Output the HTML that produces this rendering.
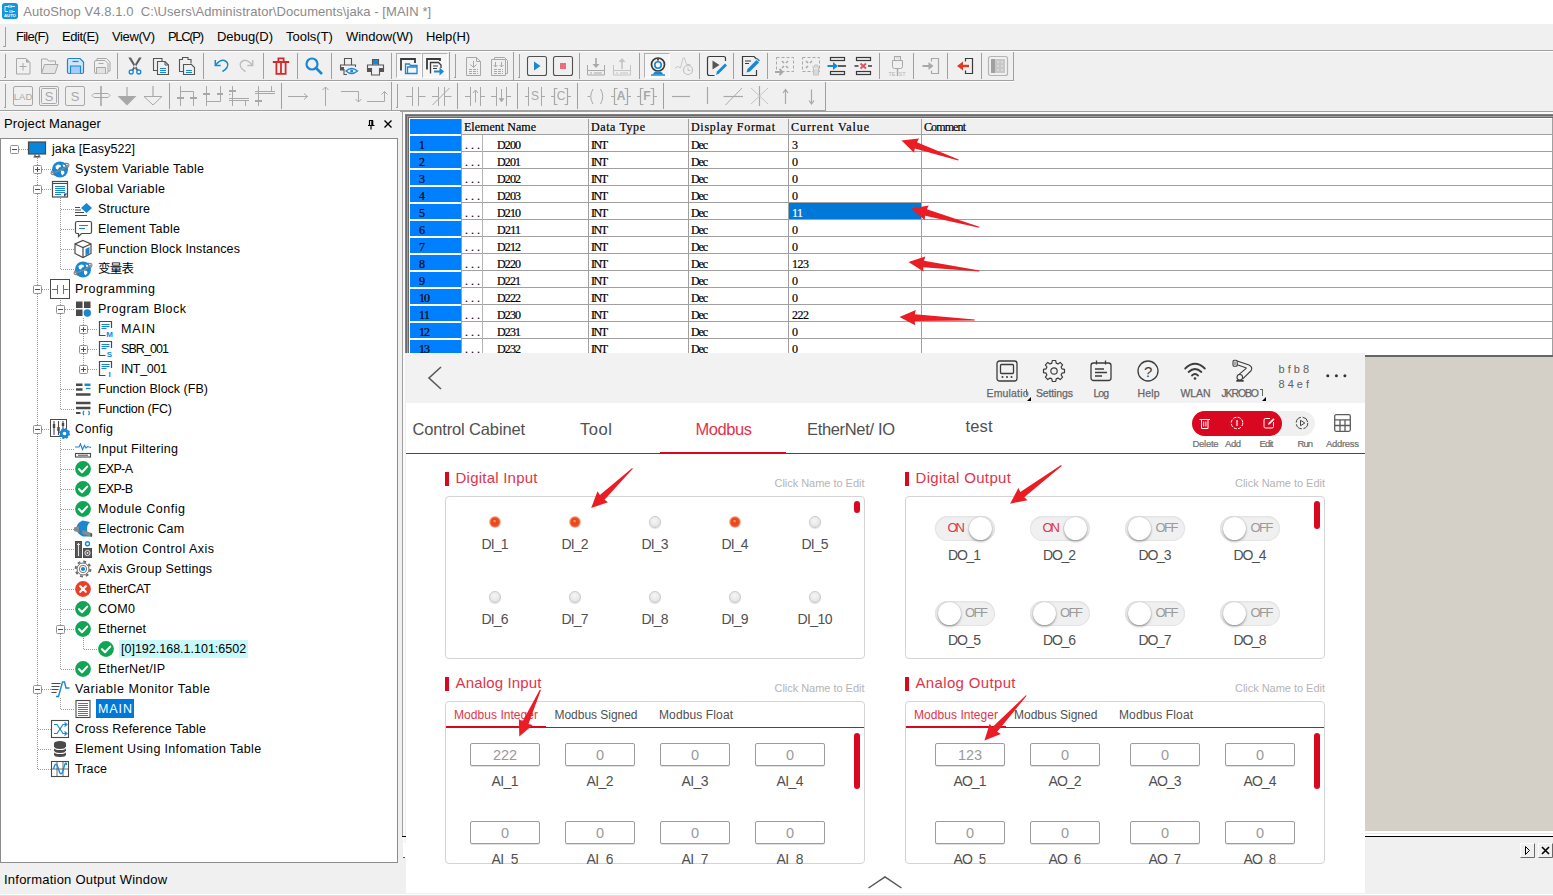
<!DOCTYPE html>
<html lang="en"><head><meta charset="utf-8"><title>AutoShop</title><style>
html,body{margin:0;padding:0;}
body{width:1553px;height:896px;overflow:hidden;background:#f0f0f0;position:relative;font-family:"Liberation Sans","Noto Sans CJK SC",sans-serif;}
div,span.t,svg{position:absolute;box-sizing:border-box;}
span.t{white-space:pre;}
svg{overflow:visible;}
</style></head><body>
<!-- chrome -->
<div style="left:0px;top:0px;width:1553px;height:24px;background:#fff;"></div>
<svg style="left:2px;top:3px" width="16" height="16" viewBox="0 0 16 16"><rect width="16" height="16" rx="2.800" fill="#1397dd"/><path d="M3 3.5h4M9 3.5h4M7 2v3M9 2v3M3 3.5v5h3M8 7v3M10 7v3M10 8.5h3" stroke="#d8f0ff" stroke-width="1" fill="none"/><text x="8" y="14.3" font-size="4.200" font-weight="700" fill="#fff" text-anchor="middle" font-family="Liberation Sans, sans-serif">AUTO</text></svg>
<span class="t" style="left:23.3px;top:2.5px;font:400 13px/18px 'Liberation Sans','Noto Sans CJK SC',sans-serif;color:#8a8a8a;letter-spacing:0.06px;">AutoShop V4.8.1.0  C:\Users\Administrator\Documents\jaka - [MAIN *]</span>
<div style="left:0px;top:24px;width:1553px;height:27px;background:#f0f0f0;"></div>
<div style="left:5px;top:27px;width:1px;height:20px;background:#a0a0a0;"></div>
<div style="left:3px;top:46px;width:2px;height:1px;background:#a0a0a0;"></div>
<span class="t" style="left:16.0px;top:27.5px;font:400 13px/18px 'Liberation Sans','Noto Sans CJK SC',sans-serif;color:#000;letter-spacing:-0.76px;">File(F)</span>
<span class="t" style="left:62.0px;top:27.5px;font:400 13px/18px 'Liberation Sans','Noto Sans CJK SC',sans-serif;color:#000;letter-spacing:-0.46px;">Edit(E)</span>
<span class="t" style="left:112.0px;top:27.5px;font:400 13px/18px 'Liberation Sans','Noto Sans CJK SC',sans-serif;color:#000;letter-spacing:-0.38px;">View(V)</span>
<span class="t" style="left:168.0px;top:27.5px;font:400 13px/18px 'Liberation Sans','Noto Sans CJK SC',sans-serif;color:#000;letter-spacing:-1.32px;">PLC(P)</span>
<span class="t" style="left:217.0px;top:27.5px;font:400 13px/18px 'Liberation Sans','Noto Sans CJK SC',sans-serif;color:#000;letter-spacing:-0.05px;">Debug(D)</span>
<span class="t" style="left:286.0px;top:27.5px;font:400 13px/18px 'Liberation Sans','Noto Sans CJK SC',sans-serif;color:#000;">Tools(T)</span>
<span class="t" style="left:346.0px;top:27.5px;font:400 13px/18px 'Liberation Sans','Noto Sans CJK SC',sans-serif;color:#000;letter-spacing:-0.02px;">Window(W)</span>
<span class="t" style="left:426.0px;top:27.5px;font:400 13px/18px 'Liberation Sans','Noto Sans CJK SC',sans-serif;color:#000;letter-spacing:-0.13px;">Help(H)</span>
<div style="left:0px;top:50px;width:1553px;height:1px;background:#a0a0a0;"></div>
<div style="left:0px;top:51px;width:1553px;height:1px;background:#fff;"></div>
<div style="left:0px;top:80px;width:1014px;height:1px;background:#a0a0a0;"></div>
<div style="left:0px;top:81px;width:1014px;height:1px;background:#fff;"></div>
<div style="left:0px;top:110px;width:826px;height:1px;background:#a0a0a0;"></div>
<div style="left:0px;top:111px;width:400px;height:1px;background:#fbfbfb;"></div>
<span class="t" style="left:4.0px;top:114.5px;font:400 13px/18px 'Liberation Sans','Noto Sans CJK SC',sans-serif;color:#000;letter-spacing:0.11px;">Project Manager</span>
<svg style="left:366px;top:119px" width="10" height="11" viewBox="0 0 10 11"><path d="M3 1.500h4M3.500 1.500v5M6 1.500v5M2 6.500h6.500M5 6.500v4" stroke="#000" stroke-width="1.200" fill="none"/><path d="M6.500 1.500v5" stroke="#000" stroke-width="1.600"/></svg>
<svg style="left:383px;top:119px" width="10" height="10" viewBox="0 0 10 10"><path d="M1.5 1.5l7 7M8.5 1.5l-7 7" stroke="#000" stroke-width="1.4" fill="none"/></svg>
<div style="left:0px;top:138px;width:398px;height:725px;background:#fff;border:1px solid #8c8c8c;"></div>
<span class="t" style="left:4.0px;top:870.5px;font:400 13px/18px 'Liberation Sans','Noto Sans CJK SC',sans-serif;color:#000;letter-spacing:0.23px;">Information Output Window</span>
<div style="left:0px;top:894px;width:1553px;height:1px;background:#fdfdfd;"></div>
<div style="left:0px;top:895px;width:1553px;height:1px;background:#dedede;"></div>
<div style="left:1365px;top:357px;width:188px;height:474px;background:#d4d0c8;"></div>
<div style="left:1365px;top:831px;width:188px;height:5px;background:#fff;"></div>
<div style="left:1365px;top:833px;width:188px;height:1px;background:#e6e6e6;"></div>
<div style="left:1365px;top:836px;width:188px;height:1px;background:#000;"></div>
<svg style="left:1520px;top:843px" width="34" height="15" viewBox="0 0 34 15"><rect x="0.500" y="0.500" width="14" height="14" fill="#f0f0f0" stroke="#fff"/><path d="M14.500 0.500v14h-14" stroke="#696969" fill="none"/><path d="M5.500 3.500v8l4-4z" fill="none" stroke="#000" stroke-width="1"/><rect x="18.500" y="0.500" width="14" height="14" fill="#f0f0f0" stroke="#fff"/><path d="M32.500 0.500v14h-14" stroke="#696969" fill="none"/><path d="M22 4l7 7M29 4l-7 7" stroke="#000" stroke-width="1.600"/></svg>
<!-- toolbar -->
<div style="left:396px;top:53px;width:26px;height:25px;background:#f6f6f6;border:1px solid #fff;border-top-color:#b0b0b0;border-left-color:#b0b0b0;"></div>
<div style="left:422px;top:53px;width:26px;height:25px;background:#f6f6f6;border:1px solid #fff;border-top-color:#b0b0b0;border-left-color:#b0b0b0;"></div>
<div style="left:644px;top:53px;width:26px;height:25px;background:#f6f6f6;border:1px solid #fff;border-top-color:#b0b0b0;border-left-color:#b0b0b0;"></div>
<div style="left:5px;top:54px;width:1px;height:24px;background:#a0a0a0;"></div><div style="left:4px;top:77px;width:2px;height:1px;background:#a0a0a0;"></div>
<div style="left:455px;top:54px;width:1px;height:24px;background:#a0a0a0;"></div><div style="left:454px;top:77px;width:2px;height:1px;background:#a0a0a0;"></div>
<div style="left:519px;top:54px;width:1px;height:24px;background:#a0a0a0;"></div><div style="left:518px;top:77px;width:2px;height:1px;background:#a0a0a0;"></div>
<div style="left:449px;top:52px;width:1px;height:29px;background:#a0a0a0;"></div>
<div style="left:513px;top:52px;width:1px;height:29px;background:#a0a0a0;"></div>
<div style="left:1013px;top:52px;width:1px;height:29px;background:#a0a0a0;"></div>
<div style="left:117px;top:53px;width:1px;height:26px;background:#a0a0a0;"></div>
<div style="left:203px;top:53px;width:1px;height:26px;background:#a0a0a0;"></div>
<div style="left:263px;top:53px;width:1px;height:26px;background:#a0a0a0;"></div>
<div style="left:297px;top:53px;width:1px;height:26px;background:#a0a0a0;"></div>
<div style="left:331px;top:53px;width:1px;height:26px;background:#a0a0a0;"></div>
<div style="left:391px;top:53px;width:1px;height:26px;background:#a0a0a0;"></div>
<div style="left:579px;top:53px;width:1px;height:26px;background:#a0a0a0;"></div>
<div style="left:639px;top:53px;width:1px;height:26px;background:#a0a0a0;"></div>
<div style="left:699px;top:53px;width:1px;height:26px;background:#a0a0a0;"></div>
<div style="left:733px;top:53px;width:1px;height:26px;background:#a0a0a0;"></div>
<div style="left:767px;top:53px;width:1px;height:26px;background:#a0a0a0;"></div>
<div style="left:879px;top:53px;width:1px;height:26px;background:#a0a0a0;"></div>
<div style="left:913px;top:53px;width:1px;height:26px;background:#a0a0a0;"></div>
<div style="left:947px;top:53px;width:1px;height:26px;background:#a0a0a0;"></div>
<div style="left:981px;top:53px;width:1px;height:26px;background:#a0a0a0;"></div>
<svg style="left:12px;top:56px" width="20" height="20" viewBox="0 0 20 20" fill="none" stroke-linecap="butt"><path d="M4.500 2.500h9.500l4 4v11.500h-13.500z" stroke="#a8a8a8"/><path d="M14 2.500v4h4z" fill="#a8a8a8"/><path d="M7.500 10.500h7M11 7v7.500" stroke="#a8a8a8"/></svg>
<svg style="left:38px;top:56px" width="20" height="20" viewBox="0 0 20 20" fill="none" stroke-linecap="butt"><path d="M3.500 17v-14h5.500l1.500 2h7v3" stroke="#a8a8a8"/><path d="M3.500 17.500l3-9h13.500l-3 9z" stroke="#a8a8a8" fill="#e4e4e4"/></svg>
<svg style="left:65px;top:56px" width="20" height="20" viewBox="0 0 20 20" fill="none" stroke-linecap="butt"><path d="M2.500 4q0-1.500 1.500-1.500h11l3.500 3.500v10q0 1.500-1.500 1.500h-13q-1.500 0-1.500-1.500z" fill="#d2e6fa" stroke="#1a87d2" stroke-width="1.200"/><path d="M7.500 5.500h6" stroke="#1a87d2" stroke-width="1.200"/><path d="M5.500 17.500v-7.500h10v7.500" fill="#a4ccf4" stroke="#1a87d2" stroke-width="1.200"/></svg>
<svg style="left:91px;top:56px" width="20" height="20" viewBox="0 0 20 20" fill="none" stroke-linecap="butt"><path d="M6 4.500v-2h9.500l3.500 3.500v9h-2" stroke="#a8a8a8"/><path d="M3.500 6q0-1.500 1.500-1.500h9l3 3v8.500q0 1.500-1.500 1.500h-10.500q-1.500 0-1.500-1.500z" stroke="#a8a8a8" fill="#f0f0f0"/><path d="M7.500 7.500h5" stroke="#a8a8a8"/><path d="M5.500 17.500v-6h9v6" stroke="#a8a8a8" fill="#e2e2e2"/></svg>
<svg style="left:125px;top:56px" width="20" height="20" viewBox="0 0 20 20" fill="none" stroke-linecap="butt"><path d="M3.300 1.500l2.700 0 7.200 12.300-1.600 1zM16.700 1.500l-2.700 0-7.200 12.300 1.600 1z" fill="#606060"/><circle cx="6.200" cy="16" r="2" stroke="#1a87d2" stroke-width="1.300"/><circle cx="13.800" cy="16" r="2" stroke="#1a87d2" stroke-width="1.300"/></svg>
<svg style="left:151px;top:56px" width="20" height="20" viewBox="0 0 20 20" fill="none" stroke-linecap="butt"><path d="M6 14.500h-3.500v-12h8.500v2.500" stroke="#555" stroke-width="1.100"/><path d="M6.500 5.500h7.500l3.500 3.500v9.500h-11z" stroke="#555" stroke-width="1.100"/><path d="M14 5.500v3.500h3.500" stroke="#555" stroke-width="1"/><path d="M9 12.500h6M9 14.500h6M9 16.500h6" stroke="#1a87d2"/></svg>
<svg style="left:177px;top:56px" width="20" height="20" viewBox="0 0 20 20" fill="none" stroke-linecap="butt"><path d="M6 15.500h-3.500v-12h3v-2h5.500v2h3v4" stroke="#555" stroke-width="1.100"/><path d="M6.500 8.500h8l3 3v7h-11z" stroke="#555" stroke-width="1.100"/><path d="M9 14.500h6M9 16.500h6" stroke="#1a87d2"/></svg>
<svg style="left:211px;top:56px" width="20" height="20" viewBox="0 0 20 20" fill="none" stroke-linecap="butt"><path d="M4.300 4v5.500h5.400" stroke="#1a87d2" stroke-width="1.500"/><path d="M4.800 9q4.200-5.500 8.700-4.500q5 2.500 2.500 7q-1.500 2.500-4.500 4" stroke="#1a87d2" stroke-width="1.500"/></svg>
<svg style="left:237px;top:56px" width="20" height="20" viewBox="0 0 20 20" fill="none" stroke-linecap="butt"><path d="M15.700 4v5.500h-5.400" stroke="#bcbcbc" stroke-width="1.400"/><path d="M15.200 9q-4.200-5.500-8.700-4.500q-5 2.500-2.500 7q1.500 2.500 4.500 4" stroke="#bcbcbc" stroke-width="1.400"/></svg>
<svg style="left:271px;top:56px" width="20" height="20" viewBox="0 0 20 20" fill="none" stroke-linecap="butt"><path d="M1.800 6h16.400M7.400 5.500v-3.200h5.200v3.200" stroke="#d42a2a" stroke-width="1.800"/><path d="M5.400 6.500v11.300h9.200v-11.300" stroke="#d42a2a" stroke-width="1.800"/><path d="M10 7v10" stroke="#d42a2a" stroke-width="1.800"/></svg>
<svg style="left:304px;top:56px" width="20" height="20" viewBox="0 0 20 20" fill="none" stroke-linecap="butt"><circle cx="8" cy="8" r="5.500" stroke="#1a87d2" stroke-width="2.200"/><path d="M12 12l6 6" stroke="#1a87d2" stroke-width="2.600"/></svg>
<svg style="left:338px;top:56px" width="20" height="20" viewBox="0 0 20 20" fill="none" stroke-linecap="butt"><path d="M6.500 9v-6.500h7v6.500" stroke="#555" stroke-width="1.100"/><path d="M2.500 13v-4h15v2" stroke="#555" stroke-width="1.100"/><rect x="2" y="11" width="4" height="3.500" fill="#555"/><path d="M6 13v5.500h3" stroke="#555" stroke-width="1.100"/><path d="M8 15q5.500-5 11.500 0q-6 5-11.500 0z" stroke="#1a87d2" stroke-width="1.300" fill="#f0f0f0"/><circle cx="13.700" cy="15" r="1.500" fill="#1a87d2"/></svg>
<svg style="left:365px;top:56px" width="20" height="20" viewBox="0 0 20 20" fill="none" stroke-linecap="butt"><path d="M7.500 9v-5.500h6v5.500" stroke="#555" stroke-width="1.100"/><rect x="8" y="4" width="5" height="4.500" fill="#1a87d2"/><path d="M2.500 15v-6h16v6" stroke="#555" stroke-width="1.100"/><rect x="2" y="12" width="4.500" height="4" fill="#555"/><rect x="14.500" y="12" width="4.500" height="4" fill="#555"/><path d="M6.500 12v7h8v-7" stroke="#555" stroke-width="1.100" fill="#f0f0f0"/></svg>
<svg style="left:399px;top:56px" width="20" height="20" viewBox="0 0 20 20" fill="none" stroke-linecap="butt"><path d="M2 14.500v-11.500h14v4" stroke="#3a3a3a" stroke-width="1.800"/><path d="M6.500 17.500v-9.500h4l1 1.500h6.500v8z" stroke="#1a87d2" stroke-width="1.300" fill="#f6f6f6"/><path d="M8.500 17.500v-6.500h9.500" stroke="#1a87d2" stroke-width="1.300"/></svg>
<svg style="left:425px;top:56px" width="20" height="20" viewBox="0 0 20 20" fill="none" stroke-linecap="butt"><path d="M2 13.500v-10.500h13v2" stroke="#3a3a3a" stroke-width="1.800"/><path d="M5.500 17.500v-11h8l2.500 2.500v3" stroke="#3a3a3a" stroke-width="1.300"/><path d="M8 10h5M8 12.500h4" stroke="#3a3a3a"/><path d="M9 15.500h8" stroke="#1a87d2" stroke-width="2"/><path d="M14.500 11.500l4.500 4-4.500 4z" fill="#1a87d2"/></svg>
<svg style="left:463px;top:56px" width="20" height="20" viewBox="0 0 20 20" fill="none" stroke-linecap="butt"><path d="M3.500 1.500h10l4 4v14h-14z" stroke="#a8a8a8"/><path d="M13.500 1.500v4h4" stroke="#a8a8a8"/><path d="M10.500 5v6M7.500 8.500l3 3 3-3" stroke="#a8a8a8"/><path d="M6 13.500h9M6 15.500h9M6 17.500h9" stroke="#a8a8a8" stroke-dasharray="3 1"/></svg>
<svg style="left:489px;top:56px" width="20" height="20" viewBox="0 0 20 20" fill="none" stroke-linecap="butt"><path d="M5.500 3v-1.500h10l3 3v13h-1.500" stroke="#a8a8a8"/><path d="M2.500 3.500h14v16h-14z" stroke="#a8a8a8" fill="#f0f0f0"/><path d="M6.500 6v5M4.500 9l2 2 2-2M12.500 6v5M10.500 9l2 2 2-2" stroke="#a8a8a8"/><path d="M5 13.500h9M5 15.500h9M5 17.500h9" stroke="#a8a8a8" stroke-dasharray="3 1"/></svg>
<svg style="left:527px;top:56px" width="20" height="20" viewBox="0 0 20 20" fill="none" stroke-linecap="butt"><rect x="0.500" y="0.500" width="19" height="19" rx="2" stroke="#505050" stroke-width="1.100"/><path d="M7 5.500v9l6.500-4.500z" fill="#1a87d2"/></svg>
<svg style="left:553px;top:56px" width="20" height="20" viewBox="0 0 20 20" fill="none" stroke-linecap="butt"><rect x="0.500" y="0.500" width="19" height="19" rx="2" stroke="#505050" stroke-width="1.100"/><rect x="7" y="7" width="6" height="6" fill="#ea6e78"/></svg>
<svg style="left:586px;top:56px" width="20" height="20" viewBox="0 0 20 20" fill="none" stroke-linecap="butt"><path d="M10 2v8" stroke="#a8a8a8" stroke-width="1.600"/><path d="M6.500 8l3.500 4 3.500-4z" fill="#a8a8a8"/><path d="M1.500 9v10h17v-10M1.500 14.500h17" stroke="#a8a8a8"/><path d="M4 17h2M8 17h8" stroke="#a8a8a8"/></svg>
<svg style="left:612px;top:56px" width="20" height="20" viewBox="0 0 20 20" fill="none" stroke-linecap="butt"><path d="M10 5v8" stroke="#c4c4c4" stroke-width="1.600"/><path d="M6.500 6l3.500-4 3.500 4z" fill="#c4c4c4"/><path d="M1.500 9v10h17v-10M1.500 14.500h17" stroke="#c4c4c4"/><path d="M4 17h2M8 17h8" stroke="#c4c4c4"/></svg>
<svg style="left:648px;top:56px" width="20" height="20" viewBox="0 0 20 20" fill="none" stroke-linecap="butt"><circle cx="10" cy="8.500" r="6.500" stroke="#3a3a3a" stroke-width="1.700"/><circle cx="10" cy="9" r="3.200" stroke="#1a87d2" stroke-width="1.600"/><circle cx="10" cy="3.800" r="1" fill="#3a3a3a"/><path d="M7 15.500h6l2.500 3h-11z" fill="#1a87d2"/><path d="M3 19h14" stroke="#1a87d2" stroke-width="1.400"/></svg>
<svg style="left:674px;top:56px" width="20" height="20" viewBox="0 0 20 20" fill="none" stroke-linecap="butt"><path d="M1 12l3-1.500 2.500 1.500 2.500-10h1.500l2 6.500h4" stroke="#c8c8c8"/><circle cx="14" cy="14" r="4.500" stroke="#c0c0c0" stroke-width="1.200" fill="#f0f0f0"/><path d="M14 11.500v3h2.500" stroke="#c0c0c0"/></svg>
<svg style="left:707px;top:56px" width="20" height="20" viewBox="0 0 20 20" fill="none" stroke-linecap="butt"><path d="M18.500 5v-2.500q0-2-2-2h-14q-2 0-2 2v15q0 2 2 2h5" stroke="#3a3a3a" stroke-width="1.200"/><path d="M5.500 4.500v9l7-4.500z" fill="#555"/><path d="M9 19l1-3.500 8-8 2 2-8 8z" fill="#1a87d2"/></svg>
<svg style="left:741px;top:56px" width="20" height="20" viewBox="0 0 20 20" fill="none" stroke-linecap="butt"><path d="M15.500 14v5.500h-14v-19h11.500l2.500 2.500" stroke="#3a3a3a" stroke-width="1.200"/><path d="M4 5h6M4 7.500h4" stroke="#3a3a3a"/><path d="M5.500 16.500l1-3.500 9-9 2.500 2.500-9 9z" fill="#1a87d2"/><path d="M16 2.500l2.500 2.500" stroke="#1a87d2" stroke-width="1.500"/></svg>
<svg style="left:775px;top:56px" width="20" height="20" viewBox="0 0 20 20" fill="none" stroke-linecap="butt"><rect x="1.500" y="1.500" width="17" height="14" stroke="#a8a8a8" stroke-dasharray="3 2"/><path d="M7 5l2 2M13 5l-2 2M7 12l2-2M13 12l-2-2" stroke="#a8a8a8" stroke-width="1.600"/><path d="M0 16h7M4.500 13l3 3-3 3" stroke="#a8a8a8" stroke-width="1.800"/></svg>
<svg style="left:801px;top:56px" width="20" height="20" viewBox="0 0 20 20" fill="none" stroke-linecap="butt"><rect x="1.500" y="1.500" width="17" height="14" stroke="#a8a8a8" stroke-dasharray="3 2"/><path d="M5 5l2 2M11 5l-2 2M5 12l2-2" stroke="#a8a8a8" stroke-width="1.600"/><path d="M11 11h8M12.500 11.500v7.500h5v-7.500M14 13v5M16 13v5M13.500 10.500v-1.500h3v1.500" stroke="#c0c0c0" fill="#f0f0f0"/></svg>
<svg style="left:827px;top:56px" width="20" height="20" viewBox="0 0 20 20" fill="none" stroke-linecap="butt"><rect x="3.500" y="1.500" width="14" height="3" stroke="#3a3a3a" stroke-width="1.200"/><rect x="3.500" y="15.500" width="14" height="3" stroke="#3a3a3a" stroke-width="1.200"/><path d="M11 10h8" stroke="#3a3a3a" stroke-width="1.600"/><path d="M0.500 10h6" stroke="#1a87d2" stroke-width="2"/><path d="M6 6l5 4-5 4z" fill="#1a87d2"/></svg>
<svg style="left:853px;top:56px" width="20" height="20" viewBox="0 0 20 20" fill="none" stroke-linecap="butt"><rect x="3.500" y="1.500" width="14" height="3" stroke="#3a3a3a" stroke-width="1.200"/><rect x="3.500" y="15.500" width="14" height="3" stroke="#3a3a3a" stroke-width="1.200"/><path d="M1.500 10h4M15 10h4" stroke="#3a3a3a" stroke-width="1.600"/><path d="M7.500 7.500l5.500 5M13 7.500l-5.500 5" stroke="#e05060" stroke-width="1.800"/></svg>
<svg style="left:887px;top:56px" width="20" height="20" viewBox="0 0 20 20" fill="none" stroke-linecap="butt"><rect x="7.500" y="0.500" width="6" height="4" stroke="#a8a8a8"/><path d="M5.500 4.500h10v6q0 2-2 2h-6q-2 0-2-2z" stroke="#a8a8a8"/><path d="M10.500 12.500v7.500" stroke="#a8a8a8" stroke-width="1.400"/><path d="M9.500 2h0.800M11.500 2h0.800" stroke="#a8a8a8"/></svg>
<svg style="left:921px;top:56px" width="20" height="20" viewBox="0 0 20 20" fill="none" stroke-linecap="butt"><path d="M10.500 5.500v-3h7v15h-7v-3" stroke="#a8a8a8" stroke-width="1.200"/><path d="M1.500 10h7" stroke="#a8a8a8" stroke-width="2"/><path d="M7.500 6l5 4-5 4z" fill="#a8a8a8"/></svg>
<svg style="left:955px;top:56px" width="20" height="20" viewBox="0 0 20 20" fill="none" stroke-linecap="butt"><path d="M10.500 5.500v-3h7v15h-7v-3" stroke="#3a3a3a" stroke-width="1.200"/><path d="M7 10h7" stroke="#e03a20" stroke-width="2.400"/><path d="M8 5.500l-6 4.500 6 4.500z" fill="#e03a20"/></svg>
<svg style="left:988px;top:56px" width="20" height="20" viewBox="0 0 20 20" fill="none" stroke-linecap="butt"><rect x="0.500" y="0.500" width="19" height="19" rx="2" stroke="#b4b4b4" stroke-width="1.200"/><rect x="3" y="3" width="14" height="14" fill="#c8c8c8"/><rect x="3" y="3" width="4" height="14" fill="#a0a0a0"/><path d="M9 6h2M13 6h2M9 10h2M13 10h2M9 14h2M13 14h2" stroke="#e8e8e8"/></svg>
<span class="t" style="left:888.4px;top:70.0px;font:400 5.5px/8px 'Liberation Sans','Noto Sans CJK SC',sans-serif;color:#b4b4b4;">TE  ST</span>
<div style="left:5px;top:84px;width:1px;height:24px;background:#a0a0a0;"></div><div style="left:4px;top:107px;width:2px;height:1px;background:#a0a0a0;"></div>
<div style="left:397px;top:84px;width:1px;height:24px;background:#a0a0a0;"></div><div style="left:396px;top:107px;width:2px;height:1px;background:#a0a0a0;"></div>
<div style="left:391px;top:82px;width:1px;height:29px;background:#a0a0a0;"></div>
<div style="left:825px;top:82px;width:1px;height:29px;background:#a0a0a0;"></div>
<div style="left:169px;top:83px;width:1px;height:26px;background:#a0a0a0;"></div>
<div style="left:281px;top:83px;width:1px;height:26px;background:#a0a0a0;"></div>
<div style="left:457px;top:83px;width:1px;height:26px;background:#a0a0a0;"></div>
<div style="left:517px;top:83px;width:1px;height:26px;background:#a0a0a0;"></div>
<div style="left:577px;top:83px;width:1px;height:26px;background:#a0a0a0;"></div>
<div style="left:663px;top:83px;width:1px;height:26px;background:#a0a0a0;"></div>
<svg style="left:13px;top:86px" width="20" height="20" viewBox="0 0 20 20" fill="none" stroke-linecap="butt"><rect x="0.500" y="0.500" width="19" height="19" rx="1.500" stroke="#a8a8a8"/></svg>
<svg style="left:39px;top:86px" width="20" height="20" viewBox="0 0 20 20" fill="none" stroke-linecap="butt"><rect x="0.500" y="0.500" width="19" height="19" rx="1.500" stroke="#a8a8a8"/><rect x="2.500" y="2.500" width="15" height="15" rx="1" stroke="#a8a8a8"/></svg>
<svg style="left:65px;top:86px" width="20" height="20" viewBox="0 0 20 20" fill="none" stroke-linecap="butt"><rect x="0.500" y="0.500" width="19" height="19" rx="1.500" stroke="#a8a8a8"/></svg>
<svg style="left:91px;top:86px" width="20" height="20" viewBox="0 0 20 20" fill="none" stroke-linecap="butt"><path d="M10 0v20" stroke="#a8a8a8" stroke-width="1.600"/><path d="M1 9.500l2-2h14l2 2-2 2h-14z" stroke="#a8a8a8" fill="#f0f0f0"/><path d="M10 7v5.500" stroke="#a8a8a8" stroke-width="1.600"/></svg>
<svg style="left:117px;top:86px" width="20" height="20" viewBox="0 0 20 20" fill="none" stroke-linecap="butt"><path d="M10 1v9" stroke="#a8a8a8" stroke-width="1.200"/><path d="M0.500 10h19l-9.500 9.500z" fill="#a8a8a8"/></svg>
<svg style="left:143px;top:86px" width="20" height="20" viewBox="0 0 20 20" fill="none" stroke-linecap="butt"><path d="M10 0v10" stroke="#a8a8a8" stroke-width="1.200"/><path d="M1 10.500h18l-9 8.500z" stroke="#a8a8a8"/></svg>
<svg style="left:176px;top:86px" width="20" height="20" viewBox="0 0 20 20" fill="none" stroke-linecap="butt"><path d="M4.500 0v20M4.500 5.500h13M17.500 5.500v14.500" stroke="#a8a8a8" stroke-width="1"/><path d="M1 12h7M14 12h7" stroke="#a8a8a8" stroke-width="2"/></svg>
<svg style="left:202px;top:86px" width="20" height="20" viewBox="0 0 20 20" fill="none" stroke-linecap="butt"><path d="M4.500 0v20M18.500 0v15.500M4.500 15.500h14" stroke="#a8a8a8" stroke-width="1"/><path d="M1 8h7M15 8h6" stroke="#a8a8a8" stroke-width="2"/></svg>
<svg style="left:228px;top:86px" width="20" height="20" viewBox="0 0 20 20" fill="none" stroke-linecap="butt"><path d="M4.500 0v20M1 12.500h20M1 14.500h20M17.500 14.500v5.500" stroke="#a8a8a8" stroke-width="1"/><path d="M1 5h7" stroke="#a8a8a8" stroke-width="2"/><path d="M1 8.500h1.500" stroke="#a8a8a8"/></svg>
<svg style="left:254px;top:86px" width="20" height="20" viewBox="0 0 20 20" fill="none" stroke-linecap="butt"><path d="M4.500 0v20M1 5.500h20M1 7.500h20M17.500 0v5.500" stroke="#a8a8a8" stroke-width="1"/><path d="M1 15h7" stroke="#a8a8a8" stroke-width="2"/></svg>
<svg style="left:288px;top:86px" width="20" height="20" viewBox="0 0 20 20" fill="none" stroke-linecap="butt"><path d="M0 10.500h19.500M16 7.500l3.500 3-3.500 3" stroke="#a8a8a8" stroke-width="1"/></svg>
<svg style="left:314px;top:86px" width="20" height="20" viewBox="0 0 20 20" fill="none" stroke-linecap="butt"><path d="M11.500 1v19M8.500 4l3-3 3 3" stroke="#a8a8a8" stroke-width="1"/></svg>
<svg style="left:340px;top:86px" width="20" height="20" viewBox="0 0 20 20" fill="none" stroke-linecap="butt"><path d="M1 5.500h17.500v10M15.500 13l3 3 3-3" stroke="#a8a8a8" stroke-width="1"/></svg>
<svg style="left:366px;top:86px" width="20" height="20" viewBox="0 0 20 20" fill="none" stroke-linecap="butt"><path d="M1 15.500h17.500v-10M15.500 8.500l3-3 3 3" stroke="#a8a8a8" stroke-width="1"/></svg>
<svg style="left:406px;top:86px" width="20" height="20" viewBox="0 0 20 20" fill="none" stroke-linecap="butt"><path d="M0 10.500h6.500M12.500 10.500h7M6.500 1v19M12.500 1v19" stroke="#a8a8a8" stroke-width="1"/></svg>
<svg style="left:432px;top:86px" width="20" height="20" viewBox="0 0 20 20" fill="none" stroke-linecap="butt"><path d="M0 10.500h6.500M12.500 10.500h7M6.500 1v19M12.500 1v19M0.500 19l17-17" stroke="#a8a8a8" stroke-width="1"/></svg>
<svg style="left:465px;top:86px" width="20" height="20" viewBox="0 0 20 20" fill="none" stroke-linecap="butt"><path d="M0 10.500h5M15 10.500h5M5.500 1v19M15.500 1v19M10.500 4.500v12M8 7l2.500-3 2.500 3" stroke="#a8a8a8" stroke-width="1"/></svg>
<svg style="left:491px;top:86px" width="20" height="20" viewBox="0 0 20 20" fill="none" stroke-linecap="butt"><path d="M0 10.500h5M15 10.500h5M5.500 1v19M15.500 1v19M10.500 3v12" stroke="#a8a8a8" stroke-width="1"/><path d="M8 12.500l2.500 3.500 2.500-3.500z" fill="#a8a8a8" stroke="#a8a8a8" stroke-width="0.600"/></svg>
<svg style="left:525px;top:86px" width="20" height="20" viewBox="0 0 20 20" fill="none" stroke-linecap="butt"><path d="M0 10.500h3.500M16.500 10.500h3.500M3.500 1v19M16.500 1v19" stroke="#a8a8a8" stroke-width="1"/></svg>
<svg style="left:551px;top:86px" width="20" height="20" viewBox="0 0 20 20" fill="none" stroke-linecap="butt"><path d="M0 10.500h3M17 10.500h3M6.500 2.500h-3v16h3M13.500 2.500h3v16h-3" stroke="#a8a8a8" stroke-width="1.200"/></svg>
<svg style="left:586px;top:86px" width="20" height="20" viewBox="0 0 20 20" fill="none" stroke-linecap="butt"><path d="M1.500 10.500h2.500M7 3q-4.500 7.500 0 15M14.500 3q4.500 7.500 0 15" stroke="#a8a8a8" stroke-width="1"/></svg>
<svg style="left:611px;top:86px" width="20" height="20" viewBox="0 0 20 20" fill="none" stroke-linecap="butt"><path d="M0 10.500h3M17 10.500h3M6.500 2.500h-3v16h3M13.500 2.500h3v16h-3" stroke="#a8a8a8" stroke-width="1.200"/></svg>
<svg style="left:637px;top:86px" width="20" height="20" viewBox="0 0 20 20" fill="none" stroke-linecap="butt"><path d="M0 10.500h3M17 10.500h3M6.500 2.500h-3v16h3M13.500 2.500h3v16h-3" stroke="#a8a8a8" stroke-width="1.200"/></svg>
<svg style="left:671px;top:86px" width="20" height="20" viewBox="0 0 20 20" fill="none" stroke-linecap="butt"><path d="M1 10.500h18" stroke="#a8a8a8" stroke-width="1.200"/></svg>
<svg style="left:697px;top:86px" width="20" height="20" viewBox="0 0 20 20" fill="none" stroke-linecap="butt"><path d="M10.500 1v17" stroke="#a8a8a8" stroke-width="1.200"/></svg>
<svg style="left:723px;top:86px" width="20" height="20" viewBox="0 0 20 20" fill="none" stroke-linecap="butt"><path d="M0.500 10.500h19.500" stroke="#a8a8a8" stroke-width="1.200"/><path d="M2.500 19l16.500-17" stroke="#a8a8a8" stroke-width="1"/></svg>
<svg style="left:749px;top:86px" width="20" height="20" viewBox="0 0 20 20" fill="none" stroke-linecap="butt"><path d="M10.500 0v20" stroke="#a8a8a8" stroke-width="1.200"/><path d="M2 2l17 16M19 2l-17 16" stroke="#c4c4c4" stroke-width="1"/></svg>
<svg style="left:775px;top:86px" width="20" height="20" viewBox="0 0 20 20" fill="none" stroke-linecap="butt"><path d="M10.500 4v14" stroke="#a8a8a8" stroke-width="1.200"/><path d="M8 7l2.500-3.500 2.500 3.500" stroke="#a8a8a8" stroke-width="1.200"/></svg>
<svg style="left:801px;top:86px" width="20" height="20" viewBox="0 0 20 20" fill="none" stroke-linecap="butt"><path d="M10.500 3.500v14" stroke="#a8a8a8" stroke-width="1.200"/><path d="M8 14.500l2.500 3.500 2.500-3.500" stroke="#a8a8a8" stroke-width="1.200"/></svg>
<span class="t" style="left:13.8px;top:90.0px;font:400 9.5px/13px 'Liberation Sans','Noto Sans CJK SC',sans-serif;color:#a8a8a8;">LAD</span>
<span class="t" style="left:44.7px;top:87.5px;font:400 13px/18px 'Liberation Sans','Noto Sans CJK SC',sans-serif;color:#a8a8a8;">S</span>
<span class="t" style="left:70.7px;top:87.5px;font:400 13px/18px 'Liberation Sans','Noto Sans CJK SC',sans-serif;color:#a8a8a8;">S</span>
<span class="t" style="left:531.0px;top:88.0px;font:400 12px/17px 'Liberation Sans','Noto Sans CJK SC',sans-serif;color:#a8a8a8;">S</span>
<span class="t" style="left:556.7px;top:88.0px;font:400 12px/17px 'Liberation Sans','Noto Sans CJK SC',sans-serif;color:#a8a8a8;">C</span>
<span class="t" style="left:616.7px;top:88.0px;font:700 12px/17px 'Liberation Sans','Noto Sans CJK SC',sans-serif;color:#a8a8a8;">A</span>
<span class="t" style="left:643.3px;top:88.0px;font:700 12px/17px 'Liberation Sans','Noto Sans CJK SC',sans-serif;color:#a8a8a8;">F</span>
<!-- tree -->
<div style="left:37px;top:158px;width:1px;height:612px;background:repeating-linear-gradient(to bottom,#9a9a9a 0 1px,transparent 1px 2px);"></div>
<div style="left:60px;top:198px;width:1px;height:72px;background:repeating-linear-gradient(to bottom,#9a9a9a 0 1px,transparent 1px 2px);"></div>
<div style="left:60px;top:298px;width:1px;height:112px;background:repeating-linear-gradient(to bottom,#9a9a9a 0 1px,transparent 1px 2px);"></div>
<div style="left:83px;top:318px;width:1px;height:52px;background:repeating-linear-gradient(to bottom,#9a9a9a 0 1px,transparent 1px 2px);"></div>
<div style="left:60px;top:438px;width:1px;height:232px;background:repeating-linear-gradient(to bottom,#9a9a9a 0 1px,transparent 1px 2px);"></div>
<div style="left:83px;top:638px;width:1px;height:12px;background:repeating-linear-gradient(to bottom,#9a9a9a 0 1px,transparent 1px 2px);"></div>
<div style="left:60px;top:698px;width:1px;height:12px;background:repeating-linear-gradient(to bottom,#9a9a9a 0 1px,transparent 1px 2px);"></div>
<div style="left:19px;top:149px;width:9px;height:1px;background:repeating-linear-gradient(to right,#9a9a9a 0 1px,transparent 1px 2px);"></div>
<svg style="left:10.0px;top:144.5px" width="9" height="9" viewBox="0 0 9 9"><rect x="0.500" y="0.500" width="8" height="8" rx="1" fill="#fcfcfc" stroke="#919191"/><path d="M2 4.500h5" stroke="#3a4a9a"/></svg>
<svg style="left:27px;top:139px" width="20" height="20" viewBox="0 0 20 20" fill="none"><rect x="1.500" y="3" width="17" height="12" fill="#0a86d8" stroke="#4a4a4a" stroke-width="1.200"/><path d="M8 15.500v2h4v-2M6.500 18h7" stroke="#4a4a4a" stroke-width="1.200"/></svg>
<span class="t" style="left:52.0px;top:140.0px;font:400 12.5px/18px 'Liberation Sans','Noto Sans CJK SC',sans-serif;color:#000;letter-spacing:0.08px;">jaka [Easy522]</span>
<div style="left:42px;top:169px;width:9px;height:1px;background:repeating-linear-gradient(to right,#9a9a9a 0 1px,transparent 1px 2px);"></div>
<svg style="left:33.0px;top:164.5px" width="9" height="9" viewBox="0 0 9 9"><rect x="0.500" y="0.500" width="8" height="8" rx="1" fill="#fcfcfc" stroke="#919191"/><path d="M2 4.500h5" stroke="#3a4a9a"/><path d="M4.500 2v5" stroke="#3a4a9a"/></svg>
<svg style="left:50px;top:159px" width="20" height="20" viewBox="0 0 20 20" fill="none"><ellipse cx="10" cy="10" rx="10" ry="3.6" transform="rotate(-28 10 10)" stroke="#8a8a8a" stroke-width="1.2"/><circle cx="10" cy="10.500" r="8" fill="#1a87d2"/><path d="M5.500 7l2.500-1.500 2.500 0.500 0.500 2-2 0.500-1 2-2-0.500zM11 11.500l3 0.500 0.500 2-2 2.500-1.500-2zM12.500 5.500l2.500 0.500 0.500 1.500-2 0.500z" fill="#fff"/><path d="M1.200 13.500q7.500 0.500 17-7.500" stroke="#8a8a8a" stroke-width="1.200"/></svg>
<span class="t" style="left:75.0px;top:160.0px;font:400 12.5px/18px 'Liberation Sans','Noto Sans CJK SC',sans-serif;color:#000;letter-spacing:0.29px;">System Variable Table</span>
<div style="left:42px;top:189px;width:9px;height:1px;background:repeating-linear-gradient(to right,#9a9a9a 0 1px,transparent 1px 2px);"></div>
<svg style="left:33.0px;top:184.5px" width="9" height="9" viewBox="0 0 9 9"><rect x="0.500" y="0.500" width="8" height="8" rx="1" fill="#fcfcfc" stroke="#919191"/><path d="M2 4.500h5" stroke="#3a4a9a"/></svg>
<svg style="left:50px;top:179px" width="20" height="20" viewBox="0 0 20 20" fill="none"><rect x="2.500" y="2.500" width="15" height="15.500" fill="#fff" stroke="#4a4a4a" stroke-width="1.200"/><path d="M2.500 4.500h15" stroke="#4a4a4a"/><path d="M5 7.500h10M5 9.500h10M5 11.500h10M5 13.500h10M5 15.500h6" stroke="#1a87d2" stroke-width="1"/><path d="M14 18v-3.500h3.500z" fill="#4a4a4a"/></svg>
<span class="t" style="left:75.0px;top:180.0px;font:400 12.5px/18px 'Liberation Sans','Noto Sans CJK SC',sans-serif;color:#000;letter-spacing:0.39px;">Global Variable</span>
<div style="left:61px;top:209px;width:13px;height:1px;background:repeating-linear-gradient(to right,#9a9a9a 0 1px,transparent 1px 2px);"></div>
<svg style="left:73px;top:199px" width="20" height="20" viewBox="0 0 20 20" fill="none"><path d="M2 8.500h5M2 11h6M2 13.500h9M2 16.500h12" stroke="#4a4a4a" stroke-width="1"/><path d="M13.500 4l5.500 5-5.500 5-5.500-5z" fill="#1a87d2"/></svg>
<span class="t" style="left:98.0px;top:200.0px;font:400 12.5px/18px 'Liberation Sans','Noto Sans CJK SC',sans-serif;color:#000;letter-spacing:0.16px;">Structure</span>
<div style="left:61px;top:229px;width:13px;height:1px;background:repeating-linear-gradient(to right,#9a9a9a 0 1px,transparent 1px 2px);"></div>
<svg style="left:73px;top:219px" width="20" height="20" viewBox="0 0 20 20" fill="none"><path d="M2.500 4q0-1.500 1.500-1.500h13q1.500 0 1.500 1.500v9q0 1.500-1.500 1.500h-8.500l-3 3v-3h-1.500q-1.500 0-1.500-1.500z" fill="#fff" stroke="#4a4a4a" stroke-width="1.200"/><path d="M6 6.500h9M6 9.500h6" stroke="#1a87d2" stroke-width="1.200"/></svg>
<span class="t" style="left:98.0px;top:220.0px;font:400 12.5px/18px 'Liberation Sans','Noto Sans CJK SC',sans-serif;color:#000;letter-spacing:0.25px;">Element Table</span>
<div style="left:61px;top:249px;width:13px;height:1px;background:repeating-linear-gradient(to right,#9a9a9a 0 1px,transparent 1px 2px);"></div>
<svg style="left:73px;top:239px" width="20" height="20" viewBox="0 0 20 20" fill="none"><path d="M10 1.500l8 3.500v9.500l-8 4-8-4v-9.500z" fill="#fff" stroke="#4a4a4a" stroke-width="1.200"/><path d="M2 5l8 3.500 8-3.500M10 8.500v10" stroke="#4a4a4a" stroke-width="1.200"/><path d="M12.500 10l4-2v6.500l-4 2z" fill="#1a87d2"/></svg>
<span class="t" style="left:98.0px;top:240.0px;font:400 12.5px/18px 'Liberation Sans','Noto Sans CJK SC',sans-serif;color:#000;letter-spacing:0.13px;">Function Block Instances</span>
<div style="left:61px;top:269px;width:13px;height:1px;background:repeating-linear-gradient(to right,#9a9a9a 0 1px,transparent 1px 2px);"></div>
<svg style="left:73px;top:259px" width="20" height="20" viewBox="0 0 20 20" fill="none"><ellipse cx="10" cy="10" rx="10" ry="3.6" transform="rotate(-28 10 10)" stroke="#8a8a8a" stroke-width="1.2"/><circle cx="10" cy="10.500" r="8" fill="#1a87d2"/><path d="M5.500 7l2.500-1.500 2.500 0.500 0.500 2-2 0.500-1 2-2-0.500zM11 11.500l3 0.500 0.500 2-2 2.500-1.500-2zM12.500 5.500l2.500 0.500 0.500 1.500-2 0.500z" fill="#fff"/><path d="M1.200 13.500q7.500 0.500 17-7.500" stroke="#8a8a8a" stroke-width="1.200"/></svg>
<span class="t" style="left:98.0px;top:260.0px;font:400 12.5px/18px 'Liberation Sans','Noto Sans CJK SC',sans-serif;color:#000;letter-spacing:-0.76px;">变量表</span>
<div style="left:42px;top:289px;width:9px;height:1px;background:repeating-linear-gradient(to right,#9a9a9a 0 1px,transparent 1px 2px);"></div>
<svg style="left:33.0px;top:284.5px" width="9" height="9" viewBox="0 0 9 9"><rect x="0.500" y="0.500" width="8" height="8" rx="1" fill="#fcfcfc" stroke="#919191"/><path d="M2 4.500h5" stroke="#3a4a9a"/></svg>
<svg style="left:50px;top:279px" width="20" height="20" viewBox="0 0 20 20" fill="none"><rect x="0.500" y="0.500" width="19" height="19" fill="#fff" stroke="#4a4a4a" stroke-width="1"/><path d="M2 10.500h5M7.500 6v9M13.500 6v9M13.500 10.500h5" stroke="#1a87d2" stroke-width="1"/></svg>
<span class="t" style="left:75.0px;top:280.0px;font:400 12.5px/18px 'Liberation Sans','Noto Sans CJK SC',sans-serif;color:#000;letter-spacing:0.50px;">Programming</span>
<div style="left:65px;top:309px;width:9px;height:1px;background:repeating-linear-gradient(to right,#9a9a9a 0 1px,transparent 1px 2px);"></div>
<svg style="left:56.0px;top:304.5px" width="9" height="9" viewBox="0 0 9 9"><rect x="0.500" y="0.500" width="8" height="8" rx="1" fill="#fcfcfc" stroke="#919191"/><path d="M2 4.500h5" stroke="#3a4a9a"/></svg>
<svg style="left:73px;top:299px" width="20" height="20" viewBox="0 0 20 20" fill="none"><rect x="3" y="2.500" width="6.500" height="6.500" fill="#4a4a4a"/><rect x="11" y="2.500" width="6.500" height="6.500" fill="#4a4a4a"/><rect x="3" y="10.500" width="6.500" height="6.500" fill="#4a4a4a"/><circle cx="14.300" cy="14" r="3.700" fill="#1a87d2"/></svg>
<span class="t" style="left:98.0px;top:300.0px;font:400 12.5px/18px 'Liberation Sans','Noto Sans CJK SC',sans-serif;color:#000;letter-spacing:0.50px;">Program Block</span>
<div style="left:88px;top:329px;width:9px;height:1px;background:repeating-linear-gradient(to right,#9a9a9a 0 1px,transparent 1px 2px);"></div>
<svg style="left:79.0px;top:324.5px" width="9" height="9" viewBox="0 0 9 9"><rect x="0.500" y="0.500" width="8" height="8" rx="1" fill="#fcfcfc" stroke="#919191"/><path d="M2 4.500h5" stroke="#3a4a9a"/><path d="M4.500 2v5" stroke="#3a4a9a"/></svg>
<svg style="left:96px;top:319px" width="20" height="20" viewBox="0 0 20 20" fill="none"><path d="M15.500 9v-6.500h-12v14h6" stroke="#4a4a4a" stroke-width="1.200"/><path d="M5.500 5.500h8M5.500 7.500h8M5.500 9.500h5" stroke="#1a87d2" stroke-width="1"/><text x="13.500" y="17.500" font-size="8" font-weight="700" fill="#1a87d2" text-anchor="middle" font-family="Liberation Sans, sans-serif">M</text></svg>
<span class="t" style="left:121.0px;top:320.0px;font:400 12.5px/18px 'Liberation Sans','Noto Sans CJK SC',sans-serif;color:#000;letter-spacing:0.92px;">MAIN</span>
<div style="left:88px;top:349px;width:9px;height:1px;background:repeating-linear-gradient(to right,#9a9a9a 0 1px,transparent 1px 2px);"></div>
<svg style="left:79.0px;top:344.5px" width="9" height="9" viewBox="0 0 9 9"><rect x="0.500" y="0.500" width="8" height="8" rx="1" fill="#fcfcfc" stroke="#919191"/><path d="M2 4.500h5" stroke="#3a4a9a"/><path d="M4.500 2v5" stroke="#3a4a9a"/></svg>
<svg style="left:96px;top:339px" width="20" height="20" viewBox="0 0 20 20" fill="none"><path d="M15.500 9v-6.500h-12v14h6" stroke="#4a4a4a" stroke-width="1.200"/><path d="M5.500 5.500h8M5.500 7.500h8M5.500 9.500h5" stroke="#1a87d2" stroke-width="1"/><text x="13.500" y="17.500" font-size="8" font-weight="700" fill="#1a87d2" text-anchor="middle" font-family="Liberation Sans, sans-serif">S</text></svg>
<span class="t" style="left:121.0px;top:340.0px;font:400 12.5px/18px 'Liberation Sans','Noto Sans CJK SC',sans-serif;color:#000;letter-spacing:-0.92px;">SBR_001</span>
<div style="left:88px;top:369px;width:9px;height:1px;background:repeating-linear-gradient(to right,#9a9a9a 0 1px,transparent 1px 2px);"></div>
<svg style="left:79.0px;top:364.5px" width="9" height="9" viewBox="0 0 9 9"><rect x="0.500" y="0.500" width="8" height="8" rx="1" fill="#fcfcfc" stroke="#919191"/><path d="M2 4.500h5" stroke="#3a4a9a"/><path d="M4.500 2v5" stroke="#3a4a9a"/></svg>
<svg style="left:96px;top:359px" width="20" height="20" viewBox="0 0 20 20" fill="none"><path d="M15.500 9v-6.500h-12v14h6" stroke="#4a4a4a" stroke-width="1.200"/><path d="M5.500 5.500h8M5.500 7.500h8M5.500 9.500h5" stroke="#1a87d2" stroke-width="1"/><text x="13.500" y="17.500" font-size="8" font-weight="700" fill="#1a87d2" text-anchor="middle" font-family="Liberation Sans, sans-serif">I</text></svg>
<span class="t" style="left:121.0px;top:360.0px;font:400 12.5px/18px 'Liberation Sans','Noto Sans CJK SC',sans-serif;color:#000;letter-spacing:-0.33px;">INT_001</span>
<div style="left:61px;top:389px;width:13px;height:1px;background:repeating-linear-gradient(to right,#9a9a9a 0 1px,transparent 1px 2px);"></div>
<svg style="left:73px;top:379px" width="20" height="20" viewBox="0 0 20 20" fill="none"><path d="M3 5.800h6.500M3 10.400h6.500M3 15.500h14.500" stroke="#4a4a4a" stroke-width="2.500"/><path d="M11.500 5.800h6" stroke="#1a87d2" stroke-width="2.500"/><path d="M13 9.500h4.500" stroke="#1a87d2" stroke-width="1.300"/></svg>
<span class="t" style="left:98.0px;top:380.0px;font:400 12.5px/18px 'Liberation Sans','Noto Sans CJK SC',sans-serif;color:#000;letter-spacing:0.01px;">Function Block (FB)</span>
<div style="left:61px;top:409px;width:13px;height:1px;background:repeating-linear-gradient(to right,#9a9a9a 0 1px,transparent 1px 2px);"></div>
<svg style="left:73px;top:399px" width="20" height="20" viewBox="0 0 20 20" fill="none"><path d="M3 4h14.500M3 9h14.500" stroke="#4a4a4a" stroke-width="2.500"/><path d="M3 14h4.500" stroke="#4a4a4a" stroke-width="2"/><path d="M11 11.800q-1.800 2.200 0 4.400M15.500 11.800q1.800 2.200 0 4.400" stroke="#1a87d2" stroke-width="1.100"/></svg>
<span class="t" style="left:98.0px;top:400.0px;font:400 12.5px/18px 'Liberation Sans','Noto Sans CJK SC',sans-serif;color:#000;letter-spacing:-0.20px;">Function (FC)</span>
<div style="left:42px;top:429px;width:9px;height:1px;background:repeating-linear-gradient(to right,#9a9a9a 0 1px,transparent 1px 2px);"></div>
<svg style="left:33.0px;top:424.5px" width="9" height="9" viewBox="0 0 9 9"><rect x="0.500" y="0.500" width="8" height="8" rx="1" fill="#fcfcfc" stroke="#919191"/><path d="M2 4.500h5" stroke="#3a4a9a"/></svg>
<svg style="left:50px;top:419px" width="20" height="20" viewBox="0 0 20 20" fill="none"><rect x="0.500" y="0.500" width="16" height="17" fill="#fff" stroke="#4a4a4a" stroke-width="1"/><path d="M4 2v14M8.500 2v14M13 2v8" stroke="#4a4a4a" stroke-width="1.100"/><path d="M4 5v4M8.500 8v4M13 4v3" stroke="#4a4a4a" stroke-width="2.400"/><circle cx="14.500" cy="14.500" r="4.700" fill="#1a87d2" stroke="#1a87d2" stroke-width="1.600" stroke-dasharray="2 1.700"/><circle cx="14.500" cy="14.500" r="1.800" fill="#fff"/></svg>
<span class="t" style="left:75.0px;top:420.0px;font:400 12.5px/18px 'Liberation Sans','Noto Sans CJK SC',sans-serif;color:#000;letter-spacing:0.37px;">Config</span>
<div style="left:61px;top:449px;width:13px;height:1px;background:repeating-linear-gradient(to right,#9a9a9a 0 1px,transparent 1px 2px);"></div>
<svg style="left:73px;top:439px" width="20" height="20" viewBox="0 0 20 20" fill="none"><path d="M2 8h4l1.500-3 2 5.500 2-4 1.500 2.500 1.500-1.500 3.500 1" stroke="#1a87d2" stroke-width="1.100"/><rect x="2.500" y="14.500" width="15" height="3.500" fill="#fff" stroke="#4a4a4a" stroke-width="1.100"/><path d="M5 16.200h10" stroke="#4a4a4a" stroke-width="1"/></svg>
<span class="t" style="left:98.0px;top:440.0px;font:400 12.5px/18px 'Liberation Sans','Noto Sans CJK SC',sans-serif;color:#000;letter-spacing:0.30px;">Input Filtering</span>
<div style="left:61px;top:469px;width:13px;height:1px;background:repeating-linear-gradient(to right,#9a9a9a 0 1px,transparent 1px 2px);"></div>
<svg style="left:73px;top:459px" width="20" height="20" viewBox="0 0 20 20" fill="none"><circle cx="10" cy="10" r="7.900" fill="#10a554"/><path d="M6 10.200l3 3 5.200-5.600" stroke="#fff" stroke-width="2.100" stroke-linecap="round" stroke-linejoin="round"/></svg>
<span class="t" style="left:98.0px;top:460.0px;font:400 12.5px/18px 'Liberation Sans','Noto Sans CJK SC',sans-serif;color:#000;letter-spacing:-0.63px;">EXP-A</span>
<div style="left:61px;top:489px;width:13px;height:1px;background:repeating-linear-gradient(to right,#9a9a9a 0 1px,transparent 1px 2px);"></div>
<svg style="left:73px;top:479px" width="20" height="20" viewBox="0 0 20 20" fill="none"><circle cx="10" cy="10" r="7.900" fill="#10a554"/><path d="M6 10.200l3 3 5.200-5.600" stroke="#fff" stroke-width="2.100" stroke-linecap="round" stroke-linejoin="round"/></svg>
<span class="t" style="left:98.0px;top:480.0px;font:400 12.5px/18px 'Liberation Sans','Noto Sans CJK SC',sans-serif;color:#000;letter-spacing:-0.63px;">EXP-B</span>
<div style="left:61px;top:509px;width:13px;height:1px;background:repeating-linear-gradient(to right,#9a9a9a 0 1px,transparent 1px 2px);"></div>
<svg style="left:73px;top:499px" width="20" height="20" viewBox="0 0 20 20" fill="none"><circle cx="10" cy="10" r="7.900" fill="#10a554"/><path d="M6 10.200l3 3 5.200-5.600" stroke="#fff" stroke-width="2.100" stroke-linecap="round" stroke-linejoin="round"/></svg>
<span class="t" style="left:98.0px;top:500.0px;font:400 12.5px/18px 'Liberation Sans','Noto Sans CJK SC',sans-serif;color:#000;letter-spacing:0.53px;">Module Config</span>
<div style="left:61px;top:529px;width:13px;height:1px;background:repeating-linear-gradient(to right,#9a9a9a 0 1px,transparent 1px 2px);"></div>
<svg style="left:73px;top:519px" width="20" height="20" viewBox="0 0 20 20" fill="none"><path d="M9.500 1.500l7.500 1.500q-3 2.500-3 7t3 7.500l-7 0q-6.500-2.500-6.500-8t6-8z" fill="#1a87d2"/><path d="M1 8.500l5-1.500v6.500l-5-1.500z" fill="#8a8a8a"/><path d="M9.500 11l9 3v4l-9-3z" fill="#8a8a8a"/><ellipse cx="18.300" cy="16" rx="1" ry="2" fill="#5a5a5a"/></svg>
<span class="t" style="left:98.0px;top:520.0px;font:400 12.5px/18px 'Liberation Sans','Noto Sans CJK SC',sans-serif;color:#000;letter-spacing:0.10px;">Electronic Cam</span>
<div style="left:61px;top:549px;width:13px;height:1px;background:repeating-linear-gradient(to right,#9a9a9a 0 1px,transparent 1px 2px);"></div>
<svg style="left:73px;top:539px" width="20" height="20" viewBox="0 0 20 20" fill="none"><rect x="2.500" y="2.500" width="6" height="16" fill="#5a5a5a" stroke="#4a4a4a" stroke-width="1"/><path d="M5.500 4v13" stroke="#e8e8e8" stroke-width="1"/><path d="M4 5.500h3" stroke="#e8e8e8" stroke-width="1"/><rect x="10.500" y="9.500" width="8" height="9" fill="#5a5a5a" stroke="#4a4a4a" stroke-width="1"/><circle cx="14.500" cy="14" r="2.600" fill="#5a5a5a" stroke="#e8e8e8" stroke-width="1"/><circle cx="14.500" cy="14" r="0.900" fill="#e8e8e8"/><circle cx="14.500" cy="4.800" r="2" stroke="#1a87d2" stroke-width="1.400"/></svg>
<span class="t" style="left:98.0px;top:540.0px;font:400 12.5px/18px 'Liberation Sans','Noto Sans CJK SC',sans-serif;color:#000;letter-spacing:0.46px;">Motion Control Axis</span>
<div style="left:61px;top:569px;width:13px;height:1px;background:repeating-linear-gradient(to right,#9a9a9a 0 1px,transparent 1px 2px);"></div>
<svg style="left:73px;top:559px" width="20" height="20" viewBox="0 0 20 20" fill="none"><circle cx="10" cy="10" r="7.400" fill="none" stroke="#6a6a6a" stroke-width="2" stroke-dasharray="2.900 2.910"/><circle cx="10" cy="10" r="6" fill="#fff" stroke="#6a6a6a" stroke-width="1"/><circle cx="10" cy="10" r="3.700" stroke="#6a6a6a" stroke-width="0.900"/><circle cx="10" cy="10" r="2.100" fill="#1a87d2"/></svg>
<span class="t" style="left:98.0px;top:560.0px;font:400 12.5px/18px 'Liberation Sans','Noto Sans CJK SC',sans-serif;color:#000;letter-spacing:0.20px;">Axis Group Settings</span>
<div style="left:61px;top:589px;width:13px;height:1px;background:repeating-linear-gradient(to right,#9a9a9a 0 1px,transparent 1px 2px);"></div>
<svg style="left:73px;top:579px" width="20" height="20" viewBox="0 0 20 20" fill="none"><circle cx="10" cy="10" r="7.900" fill="#e8402a"/><path d="M7.200 7.200l5.600 5.600M12.800 7.200l-5.600 5.600" stroke="#fff" stroke-width="2.100" stroke-linecap="round"/></svg>
<span class="t" style="left:98.0px;top:580.0px;font:400 12.5px/18px 'Liberation Sans','Noto Sans CJK SC',sans-serif;color:#000;letter-spacing:-0.14px;">EtherCAT</span>
<div style="left:61px;top:609px;width:13px;height:1px;background:repeating-linear-gradient(to right,#9a9a9a 0 1px,transparent 1px 2px);"></div>
<svg style="left:73px;top:599px" width="20" height="20" viewBox="0 0 20 20" fill="none"><circle cx="10" cy="10" r="7.900" fill="#10a554"/><path d="M6 10.200l3 3 5.200-5.600" stroke="#fff" stroke-width="2.100" stroke-linecap="round" stroke-linejoin="round"/></svg>
<span class="t" style="left:98.0px;top:600.0px;font:400 12.5px/18px 'Liberation Sans','Noto Sans CJK SC',sans-serif;color:#000;letter-spacing:0.29px;">COM0</span>
<div style="left:65px;top:629px;width:9px;height:1px;background:repeating-linear-gradient(to right,#9a9a9a 0 1px,transparent 1px 2px);"></div>
<svg style="left:56.0px;top:624.5px" width="9" height="9" viewBox="0 0 9 9"><rect x="0.500" y="0.500" width="8" height="8" rx="1" fill="#fcfcfc" stroke="#919191"/><path d="M2 4.500h5" stroke="#3a4a9a"/></svg>
<svg style="left:73px;top:619px" width="20" height="20" viewBox="0 0 20 20" fill="none"><circle cx="10" cy="10" r="7.900" fill="#10a554"/><path d="M6 10.200l3 3 5.200-5.600" stroke="#fff" stroke-width="2.100" stroke-linecap="round" stroke-linejoin="round"/></svg>
<span class="t" style="left:98.0px;top:620.0px;font:400 12.5px/18px 'Liberation Sans','Noto Sans CJK SC',sans-serif;color:#000;letter-spacing:0.10px;">Ethernet</span>
<div style="left:84px;top:649px;width:13px;height:1px;background:repeating-linear-gradient(to right,#9a9a9a 0 1px,transparent 1px 2px);"></div>
<svg style="left:96px;top:639px" width="20" height="20" viewBox="0 0 20 20" fill="none"><circle cx="10" cy="10" r="7.900" fill="#10a554"/><path d="M6 10.200l3 3 5.200-5.600" stroke="#fff" stroke-width="2.100" stroke-linecap="round" stroke-linejoin="round"/></svg>
<div style="left:119px;top:640px;width:129px;height:18px;background:#c8f8fa;"></div>
<span class="t" style="left:121.0px;top:640.0px;font:400 12.5px/18px 'Liberation Sans','Noto Sans CJK SC',sans-serif;color:#000;">[0]192.168.1.101:6502</span>
<div style="left:61px;top:669px;width:13px;height:1px;background:repeating-linear-gradient(to right,#9a9a9a 0 1px,transparent 1px 2px);"></div>
<svg style="left:73px;top:659px" width="20" height="20" viewBox="0 0 20 20" fill="none"><circle cx="10" cy="10" r="7.900" fill="#10a554"/><path d="M6 10.200l3 3 5.200-5.600" stroke="#fff" stroke-width="2.100" stroke-linecap="round" stroke-linejoin="round"/></svg>
<span class="t" style="left:98.0px;top:660.0px;font:400 12.5px/18px 'Liberation Sans','Noto Sans CJK SC',sans-serif;color:#000;letter-spacing:0.24px;">EtherNet/IP</span>
<div style="left:42px;top:689px;width:9px;height:1px;background:repeating-linear-gradient(to right,#9a9a9a 0 1px,transparent 1px 2px);"></div>
<svg style="left:33.0px;top:684.5px" width="9" height="9" viewBox="0 0 9 9"><rect x="0.500" y="0.500" width="8" height="8" rx="1" fill="#fcfcfc" stroke="#919191"/><path d="M2 4.500h5" stroke="#3a4a9a"/></svg>
<svg style="left:50px;top:679px" width="20" height="20" viewBox="0 0 20 20" fill="none"><path d="M1.500 4.500h9M1.500 7.500h8M1.500 10.500h7M1.500 13.500h5" stroke="#4a4a4a" stroke-width="1.100"/><path d="M6 17.500h2.500l4-14.500h2l1.500 6h3.500" stroke="#1a87d2" stroke-width="1.400"/></svg>
<span class="t" style="left:75.0px;top:680.0px;font:400 12.5px/18px 'Liberation Sans','Noto Sans CJK SC',sans-serif;color:#000;letter-spacing:0.56px;">Variable Monitor Table</span>
<div style="left:61px;top:709px;width:13px;height:1px;background:repeating-linear-gradient(to right,#9a9a9a 0 1px,transparent 1px 2px);"></div>
<svg style="left:73px;top:699px" width="20" height="20" viewBox="0 0 20 20" fill="none"><rect x="3" y="1.500" width="14" height="17" fill="#fff" stroke="#4a4a4a" stroke-width="1.100"/><path d="M5 4.500h10M5 6.500h10M5 8.500h10M5 10.500h10M5 12.500h10M5 14.500h10M5 16.500h10" stroke="#1a87d2" stroke-width="1"/></svg>
<div style="left:96px;top:699px;width:38px;height:19px;background:#0078d7;"></div>
<span class="t" style="left:98.0px;top:700.0px;font:400 12.5px/18px 'Liberation Sans','Noto Sans CJK SC',sans-serif;color:#fff;letter-spacing:0.92px;">MAIN</span>
<div style="left:38px;top:729px;width:13px;height:1px;background:repeating-linear-gradient(to right,#9a9a9a 0 1px,transparent 1px 2px);"></div>
<svg style="left:50px;top:719px" width="20" height="20" viewBox="0 0 20 20" fill="none"><rect x="1.500" y="1.500" width="17" height="17" fill="#fff" stroke="#4a4a4a" stroke-width="1.100"/><path d="M4 5.500h3l6 9h3M4 14.500h3l6-9h3" stroke="#1a87d2" stroke-width="1.200"/><path d="M14.500 3.500l2.500 2-2.500 2M14.500 12.500l2.500 2-2.500 2" stroke="#1a87d2" stroke-width="1.100"/></svg>
<span class="t" style="left:75.0px;top:720.0px;font:400 12.5px/18px 'Liberation Sans','Noto Sans CJK SC',sans-serif;color:#000;letter-spacing:0.20px;">Cross Reference Table</span>
<div style="left:38px;top:749px;width:13px;height:1px;background:repeating-linear-gradient(to right,#9a9a9a 0 1px,transparent 1px 2px);"></div>
<svg style="left:50px;top:739px" width="20" height="20" viewBox="0 0 20 20" fill="none"><path d="M4 4.500v11q0 2.500 6 2.500t6-2.500v-11" fill="#4a4a4a"/><ellipse cx="10" cy="4.500" rx="6" ry="2.500" fill="#4a4a4a"/><path d="M4 8q0 2.500 6 2.500t6-2.500M4 12q0 2.500 6 2.500t6-2.500" stroke="#fff" stroke-width="1.200"/></svg>
<span class="t" style="left:75.0px;top:740.0px;font:400 12.5px/18px 'Liberation Sans','Noto Sans CJK SC',sans-serif;color:#000;letter-spacing:0.34px;">Element Using Infomation Table</span>
<div style="left:38px;top:769px;width:13px;height:1px;background:repeating-linear-gradient(to right,#9a9a9a 0 1px,transparent 1px 2px);"></div>
<svg style="left:50px;top:759px" width="20" height="20" viewBox="0 0 20 20" fill="none"><rect x="1.500" y="2.500" width="17" height="15" fill="#fff" stroke="#4a4a4a" stroke-width="1.100"/><path d="M7 3v14M13 3v14M2 10h16" stroke="#4a4a4a" stroke-width="0.800"/><path d="M3.500 10q2.500-9.500 5 0t5 0 3-4" stroke="#1a87d2" stroke-width="1.300"/></svg>
<span class="t" style="left:75.0px;top:760.0px;font:400 12.5px/18px 'Liberation Sans','Noto Sans CJK SC',sans-serif;color:#000;letter-spacing:0.12px;">Trace</span>
<!-- table -->
<div style="left:400px;top:111px;width:1153px;height:1px;background:#a0a0a0;"></div>
<div style="left:402px;top:112px;width:1px;height:725px;background:#a0a0a0;"></div>
<div style="left:403px;top:112px;width:1150px;height:2px;background:#fafafa;"></div>
<div style="left:403px;top:112px;width:2px;height:741px;background:#fafafa;"></div>
<div style="left:405px;top:114px;width:1148px;height:1px;background:#808080;"></div>
<div style="left:405px;top:114px;width:1px;height:239px;background:#808080;"></div>
<div style="left:406px;top:115px;width:1147px;height:1px;background:#696969;"></div>
<div style="left:406px;top:115px;width:1px;height:238px;background:#696969;"></div>
<div style="left:407px;top:116px;width:1146px;height:1px;background:#a0a0a0;"></div>
<div style="left:407px;top:116px;width:1px;height:237px;background:#a0a0a0;"></div>
<div style="left:408px;top:117px;width:1145px;height:1px;background:#696969;"></div>
<div style="left:408px;top:117px;width:1px;height:236px;background:#696969;"></div>
<div style="left:409px;top:118px;width:1144px;height:239px;background:#fff;"></div>
<div style="left:410px;top:119px;width:1142px;height:15px;background:#f0f0f0;"></div>
<div style="left:1552px;top:118px;width:1px;height:237px;background:#a0a0a0;"></div>
<div style="left:410px;top:134px;width:1142px;height:1px;background:#a0a0a0;"></div>
<div style="left:410px;top:151px;width:1142px;height:1px;background:#a0a0a0;"></div>
<div style="left:410px;top:168px;width:1142px;height:1px;background:#a0a0a0;"></div>
<div style="left:410px;top:185px;width:1142px;height:1px;background:#a0a0a0;"></div>
<div style="left:410px;top:202px;width:1142px;height:1px;background:#a0a0a0;"></div>
<div style="left:410px;top:219px;width:1142px;height:1px;background:#a0a0a0;"></div>
<div style="left:410px;top:236px;width:1142px;height:1px;background:#a0a0a0;"></div>
<div style="left:410px;top:253px;width:1142px;height:1px;background:#a0a0a0;"></div>
<div style="left:410px;top:270px;width:1142px;height:1px;background:#a0a0a0;"></div>
<div style="left:410px;top:287px;width:1142px;height:1px;background:#a0a0a0;"></div>
<div style="left:410px;top:304px;width:1142px;height:1px;background:#a0a0a0;"></div>
<div style="left:410px;top:321px;width:1142px;height:1px;background:#a0a0a0;"></div>
<div style="left:410px;top:338px;width:1142px;height:1px;background:#a0a0a0;"></div>
<div style="left:461px;top:119px;width:1px;height:236px;background:#a0a0a0;"></div>
<div style="left:588px;top:119px;width:1px;height:236px;background:#a0a0a0;"></div>
<div style="left:688px;top:119px;width:1px;height:236px;background:#a0a0a0;"></div>
<div style="left:788px;top:119px;width:1px;height:236px;background:#a0a0a0;"></div>
<div style="left:921px;top:119px;width:1px;height:236px;background:#a0a0a0;"></div>
<div style="left:482px;top:135px;width:1px;height:220px;background:#b4b4b4;"></div>
<div style="left:409px;top:118px;width:1px;height:239px;background:#fff;"></div>
<div style="left:410px;top:119px;width:51px;height:15px;background:#0080ff;"></div>
<div style="left:410px;top:134px;width:51px;height:2px;background:#fff;"></div>
<div style="left:410px;top:136px;width:51px;height:15px;background:#0080ff;"></div>
<div style="left:410px;top:151px;width:51px;height:2px;background:#fff;"></div>
<div style="left:410px;top:153px;width:51px;height:15px;background:#0080ff;"></div>
<div style="left:410px;top:168px;width:51px;height:2px;background:#fff;"></div>
<div style="left:410px;top:170px;width:51px;height:15px;background:#0080ff;"></div>
<div style="left:410px;top:185px;width:51px;height:2px;background:#fff;"></div>
<div style="left:410px;top:187px;width:51px;height:15px;background:#0080ff;"></div>
<div style="left:410px;top:202px;width:51px;height:2px;background:#fff;"></div>
<div style="left:410px;top:204px;width:51px;height:15px;background:#0080ff;"></div>
<div style="left:410px;top:219px;width:51px;height:2px;background:#fff;"></div>
<div style="left:410px;top:221px;width:51px;height:15px;background:#0080ff;"></div>
<div style="left:410px;top:236px;width:51px;height:2px;background:#fff;"></div>
<div style="left:410px;top:238px;width:51px;height:15px;background:#0080ff;"></div>
<div style="left:410px;top:253px;width:51px;height:2px;background:#fff;"></div>
<div style="left:410px;top:255px;width:51px;height:15px;background:#0080ff;"></div>
<div style="left:410px;top:270px;width:51px;height:2px;background:#fff;"></div>
<div style="left:410px;top:272px;width:51px;height:15px;background:#0080ff;"></div>
<div style="left:410px;top:287px;width:51px;height:2px;background:#fff;"></div>
<div style="left:410px;top:289px;width:51px;height:15px;background:#0080ff;"></div>
<div style="left:410px;top:304px;width:51px;height:2px;background:#fff;"></div>
<div style="left:410px;top:306px;width:51px;height:15px;background:#0080ff;"></div>
<div style="left:410px;top:321px;width:51px;height:2px;background:#fff;"></div>
<div style="left:410px;top:323px;width:51px;height:15px;background:#0080ff;"></div>
<div style="left:410px;top:338px;width:51px;height:2px;background:#fff;"></div>
<div style="left:410px;top:340px;width:51px;height:15px;background:#0080ff;"></div>
<div style="left:1365px;top:355px;width:188px;height:2px;background:#666;"></div>
<div style="left:789px;top:203px;width:132px;height:16px;background:#0078d7;"></div>
<span class="t" style="left:464.0px;top:118.6px;font:400 12px/17px 'Liberation Serif','Noto Serif CJK SC',serif;color:#000;letter-spacing:0.03px;-webkit-text-stroke:0.2px #000;">Element Name</span>
<span class="t" style="left:591.0px;top:118.6px;font:400 12px/17px 'Liberation Serif','Noto Serif CJK SC',serif;color:#000;letter-spacing:0.59px;-webkit-text-stroke:0.2px #000;">Data Type</span>
<span class="t" style="left:691.0px;top:118.6px;font:400 12px/17px 'Liberation Serif','Noto Serif CJK SC',serif;color:#000;letter-spacing:0.69px;-webkit-text-stroke:0.2px #000;">Display Format</span>
<span class="t" style="left:791.0px;top:118.6px;font:400 12px/17px 'Liberation Serif','Noto Serif CJK SC',serif;color:#000;letter-spacing:0.94px;-webkit-text-stroke:0.2px #000;">Current Value</span>
<span class="t" style="left:924.0px;top:118.6px;font:400 12px/17px 'Liberation Serif','Noto Serif CJK SC',serif;color:#000;letter-spacing:-0.89px;-webkit-text-stroke:0.2px #000;">Comment</span>
<span class="t" style="left:419.0px;top:137.3px;font:400 12px/17px 'Liberation Serif','Noto Serif CJK SC',serif;color:#000;-webkit-text-stroke:0.2px #000;">1</span>
<span class="t" style="left:465.0px;top:137.3px;font:400 12px/17px 'Liberation Serif','Noto Serif CJK SC',serif;color:#000;letter-spacing:3.00px;-webkit-text-stroke:0.2px #000;">...</span>
<span class="t" style="left:497.0px;top:137.3px;font:400 12px/17px 'Liberation Serif','Noto Serif CJK SC',serif;color:#000;letter-spacing:-0.89px;-webkit-text-stroke:0.2px #000;">D200</span>
<span class="t" style="left:591.0px;top:137.3px;font:400 12px/17px 'Liberation Serif','Noto Serif CJK SC',serif;color:#000;letter-spacing:-1.50px;-webkit-text-stroke:0.2px #000;">INT</span>
<span class="t" style="left:691.0px;top:137.3px;font:400 12px/17px 'Liberation Serif','Noto Serif CJK SC',serif;color:#000;letter-spacing:-1.16px;-webkit-text-stroke:0.2px #000;">Dec</span>
<span class="t" style="left:792.0px;top:137.3px;font:400 12px/17px 'Liberation Serif','Noto Serif CJK SC',serif;color:#000;-webkit-text-stroke:0.2px #000;">3</span>
<span class="t" style="left:419.0px;top:154.3px;font:400 12px/17px 'Liberation Serif','Noto Serif CJK SC',serif;color:#000;-webkit-text-stroke:0.2px #000;">2</span>
<span class="t" style="left:465.0px;top:154.3px;font:400 12px/17px 'Liberation Serif','Noto Serif CJK SC',serif;color:#000;letter-spacing:3.00px;-webkit-text-stroke:0.2px #000;">...</span>
<span class="t" style="left:497.0px;top:154.3px;font:400 12px/17px 'Liberation Serif','Noto Serif CJK SC',serif;color:#000;letter-spacing:-0.89px;-webkit-text-stroke:0.2px #000;">D201</span>
<span class="t" style="left:591.0px;top:154.3px;font:400 12px/17px 'Liberation Serif','Noto Serif CJK SC',serif;color:#000;letter-spacing:-1.50px;-webkit-text-stroke:0.2px #000;">INT</span>
<span class="t" style="left:691.0px;top:154.3px;font:400 12px/17px 'Liberation Serif','Noto Serif CJK SC',serif;color:#000;letter-spacing:-1.16px;-webkit-text-stroke:0.2px #000;">Dec</span>
<span class="t" style="left:792.0px;top:154.3px;font:400 12px/17px 'Liberation Serif','Noto Serif CJK SC',serif;color:#000;-webkit-text-stroke:0.2px #000;">0</span>
<span class="t" style="left:419.0px;top:171.3px;font:400 12px/17px 'Liberation Serif','Noto Serif CJK SC',serif;color:#000;-webkit-text-stroke:0.2px #000;">3</span>
<span class="t" style="left:465.0px;top:171.3px;font:400 12px/17px 'Liberation Serif','Noto Serif CJK SC',serif;color:#000;letter-spacing:3.00px;-webkit-text-stroke:0.2px #000;">...</span>
<span class="t" style="left:497.0px;top:171.3px;font:400 12px/17px 'Liberation Serif','Noto Serif CJK SC',serif;color:#000;letter-spacing:-0.89px;-webkit-text-stroke:0.2px #000;">D202</span>
<span class="t" style="left:591.0px;top:171.3px;font:400 12px/17px 'Liberation Serif','Noto Serif CJK SC',serif;color:#000;letter-spacing:-1.50px;-webkit-text-stroke:0.2px #000;">INT</span>
<span class="t" style="left:691.0px;top:171.3px;font:400 12px/17px 'Liberation Serif','Noto Serif CJK SC',serif;color:#000;letter-spacing:-1.16px;-webkit-text-stroke:0.2px #000;">Dec</span>
<span class="t" style="left:792.0px;top:171.3px;font:400 12px/17px 'Liberation Serif','Noto Serif CJK SC',serif;color:#000;-webkit-text-stroke:0.2px #000;">0</span>
<span class="t" style="left:419.0px;top:188.3px;font:400 12px/17px 'Liberation Serif','Noto Serif CJK SC',serif;color:#000;-webkit-text-stroke:0.2px #000;">4</span>
<span class="t" style="left:465.0px;top:188.3px;font:400 12px/17px 'Liberation Serif','Noto Serif CJK SC',serif;color:#000;letter-spacing:3.00px;-webkit-text-stroke:0.2px #000;">...</span>
<span class="t" style="left:497.0px;top:188.3px;font:400 12px/17px 'Liberation Serif','Noto Serif CJK SC',serif;color:#000;letter-spacing:-0.89px;-webkit-text-stroke:0.2px #000;">D203</span>
<span class="t" style="left:591.0px;top:188.3px;font:400 12px/17px 'Liberation Serif','Noto Serif CJK SC',serif;color:#000;letter-spacing:-1.50px;-webkit-text-stroke:0.2px #000;">INT</span>
<span class="t" style="left:691.0px;top:188.3px;font:400 12px/17px 'Liberation Serif','Noto Serif CJK SC',serif;color:#000;letter-spacing:-1.16px;-webkit-text-stroke:0.2px #000;">Dec</span>
<span class="t" style="left:792.0px;top:188.3px;font:400 12px/17px 'Liberation Serif','Noto Serif CJK SC',serif;color:#000;-webkit-text-stroke:0.2px #000;">0</span>
<span class="t" style="left:419.0px;top:205.3px;font:400 12px/17px 'Liberation Serif','Noto Serif CJK SC',serif;color:#000;-webkit-text-stroke:0.2px #000;">5</span>
<span class="t" style="left:465.0px;top:205.3px;font:400 12px/17px 'Liberation Serif','Noto Serif CJK SC',serif;color:#000;letter-spacing:3.00px;-webkit-text-stroke:0.2px #000;">...</span>
<span class="t" style="left:497.0px;top:205.3px;font:400 12px/17px 'Liberation Serif','Noto Serif CJK SC',serif;color:#000;letter-spacing:-0.89px;-webkit-text-stroke:0.2px #000;">D210</span>
<span class="t" style="left:591.0px;top:205.3px;font:400 12px/17px 'Liberation Serif','Noto Serif CJK SC',serif;color:#000;letter-spacing:-1.50px;-webkit-text-stroke:0.2px #000;">INT</span>
<span class="t" style="left:691.0px;top:205.3px;font:400 12px/17px 'Liberation Serif','Noto Serif CJK SC',serif;color:#000;letter-spacing:-1.16px;-webkit-text-stroke:0.2px #000;">Dec</span>
<span class="t" style="left:792.0px;top:205.3px;font:400 12px/17px 'Liberation Serif','Noto Serif CJK SC',serif;color:#fff;letter-spacing:-0.56px;-webkit-text-stroke:0.2px #fff;">11</span>
<span class="t" style="left:419.0px;top:222.3px;font:400 12px/17px 'Liberation Serif','Noto Serif CJK SC',serif;color:#000;-webkit-text-stroke:0.2px #000;">6</span>
<span class="t" style="left:465.0px;top:222.3px;font:400 12px/17px 'Liberation Serif','Noto Serif CJK SC',serif;color:#000;letter-spacing:3.00px;-webkit-text-stroke:0.2px #000;">...</span>
<span class="t" style="left:497.0px;top:222.3px;font:400 12px/17px 'Liberation Serif','Noto Serif CJK SC',serif;color:#000;letter-spacing:-0.74px;-webkit-text-stroke:0.2px #000;">D211</span>
<span class="t" style="left:591.0px;top:222.3px;font:400 12px/17px 'Liberation Serif','Noto Serif CJK SC',serif;color:#000;letter-spacing:-1.50px;-webkit-text-stroke:0.2px #000;">INT</span>
<span class="t" style="left:691.0px;top:222.3px;font:400 12px/17px 'Liberation Serif','Noto Serif CJK SC',serif;color:#000;letter-spacing:-1.16px;-webkit-text-stroke:0.2px #000;">Dec</span>
<span class="t" style="left:792.0px;top:222.3px;font:400 12px/17px 'Liberation Serif','Noto Serif CJK SC',serif;color:#000;-webkit-text-stroke:0.2px #000;">0</span>
<span class="t" style="left:419.0px;top:239.3px;font:400 12px/17px 'Liberation Serif','Noto Serif CJK SC',serif;color:#000;-webkit-text-stroke:0.2px #000;">7</span>
<span class="t" style="left:465.0px;top:239.3px;font:400 12px/17px 'Liberation Serif','Noto Serif CJK SC',serif;color:#000;letter-spacing:3.00px;-webkit-text-stroke:0.2px #000;">...</span>
<span class="t" style="left:497.0px;top:239.3px;font:400 12px/17px 'Liberation Serif','Noto Serif CJK SC',serif;color:#000;letter-spacing:-0.89px;-webkit-text-stroke:0.2px #000;">D212</span>
<span class="t" style="left:591.0px;top:239.3px;font:400 12px/17px 'Liberation Serif','Noto Serif CJK SC',serif;color:#000;letter-spacing:-1.50px;-webkit-text-stroke:0.2px #000;">INT</span>
<span class="t" style="left:691.0px;top:239.3px;font:400 12px/17px 'Liberation Serif','Noto Serif CJK SC',serif;color:#000;letter-spacing:-1.16px;-webkit-text-stroke:0.2px #000;">Dec</span>
<span class="t" style="left:792.0px;top:239.3px;font:400 12px/17px 'Liberation Serif','Noto Serif CJK SC',serif;color:#000;-webkit-text-stroke:0.2px #000;">0</span>
<span class="t" style="left:419.0px;top:256.3px;font:400 12px/17px 'Liberation Serif','Noto Serif CJK SC',serif;color:#000;-webkit-text-stroke:0.2px #000;">8</span>
<span class="t" style="left:465.0px;top:256.3px;font:400 12px/17px 'Liberation Serif','Noto Serif CJK SC',serif;color:#000;letter-spacing:3.00px;-webkit-text-stroke:0.2px #000;">...</span>
<span class="t" style="left:497.0px;top:256.3px;font:400 12px/17px 'Liberation Serif','Noto Serif CJK SC',serif;color:#000;letter-spacing:-0.89px;-webkit-text-stroke:0.2px #000;">D220</span>
<span class="t" style="left:591.0px;top:256.3px;font:400 12px/17px 'Liberation Serif','Noto Serif CJK SC',serif;color:#000;letter-spacing:-1.50px;-webkit-text-stroke:0.2px #000;">INT</span>
<span class="t" style="left:691.0px;top:256.3px;font:400 12px/17px 'Liberation Serif','Noto Serif CJK SC',serif;color:#000;letter-spacing:-1.16px;-webkit-text-stroke:0.2px #000;">Dec</span>
<span class="t" style="left:792.0px;top:256.3px;font:400 12px/17px 'Liberation Serif','Noto Serif CJK SC',serif;color:#000;letter-spacing:-0.50px;-webkit-text-stroke:0.2px #000;">123</span>
<span class="t" style="left:419.0px;top:273.3px;font:400 12px/17px 'Liberation Serif','Noto Serif CJK SC',serif;color:#000;-webkit-text-stroke:0.2px #000;">9</span>
<span class="t" style="left:465.0px;top:273.3px;font:400 12px/17px 'Liberation Serif','Noto Serif CJK SC',serif;color:#000;letter-spacing:3.00px;-webkit-text-stroke:0.2px #000;">...</span>
<span class="t" style="left:497.0px;top:273.3px;font:400 12px/17px 'Liberation Serif','Noto Serif CJK SC',serif;color:#000;letter-spacing:-0.89px;-webkit-text-stroke:0.2px #000;">D221</span>
<span class="t" style="left:591.0px;top:273.3px;font:400 12px/17px 'Liberation Serif','Noto Serif CJK SC',serif;color:#000;letter-spacing:-1.50px;-webkit-text-stroke:0.2px #000;">INT</span>
<span class="t" style="left:691.0px;top:273.3px;font:400 12px/17px 'Liberation Serif','Noto Serif CJK SC',serif;color:#000;letter-spacing:-1.16px;-webkit-text-stroke:0.2px #000;">Dec</span>
<span class="t" style="left:792.0px;top:273.3px;font:400 12px/17px 'Liberation Serif','Noto Serif CJK SC',serif;color:#000;-webkit-text-stroke:0.2px #000;">0</span>
<span class="t" style="left:419.0px;top:290.3px;font:400 12px/17px 'Liberation Serif','Noto Serif CJK SC',serif;color:#000;letter-spacing:-1.00px;-webkit-text-stroke:0.2px #000;">10</span>
<span class="t" style="left:465.0px;top:290.3px;font:400 12px/17px 'Liberation Serif','Noto Serif CJK SC',serif;color:#000;letter-spacing:3.00px;-webkit-text-stroke:0.2px #000;">...</span>
<span class="t" style="left:497.0px;top:290.3px;font:400 12px/17px 'Liberation Serif','Noto Serif CJK SC',serif;color:#000;letter-spacing:-0.89px;-webkit-text-stroke:0.2px #000;">D222</span>
<span class="t" style="left:591.0px;top:290.3px;font:400 12px/17px 'Liberation Serif','Noto Serif CJK SC',serif;color:#000;letter-spacing:-1.50px;-webkit-text-stroke:0.2px #000;">INT</span>
<span class="t" style="left:691.0px;top:290.3px;font:400 12px/17px 'Liberation Serif','Noto Serif CJK SC',serif;color:#000;letter-spacing:-1.16px;-webkit-text-stroke:0.2px #000;">Dec</span>
<span class="t" style="left:792.0px;top:290.3px;font:400 12px/17px 'Liberation Serif','Noto Serif CJK SC',serif;color:#000;-webkit-text-stroke:0.2px #000;">0</span>
<span class="t" style="left:419.0px;top:307.3px;font:400 12px/17px 'Liberation Serif','Noto Serif CJK SC',serif;color:#000;letter-spacing:-0.56px;-webkit-text-stroke:0.2px #000;">11</span>
<span class="t" style="left:465.0px;top:307.3px;font:400 12px/17px 'Liberation Serif','Noto Serif CJK SC',serif;color:#000;letter-spacing:3.00px;-webkit-text-stroke:0.2px #000;">...</span>
<span class="t" style="left:497.0px;top:307.3px;font:400 12px/17px 'Liberation Serif','Noto Serif CJK SC',serif;color:#000;letter-spacing:-0.89px;-webkit-text-stroke:0.2px #000;">D230</span>
<span class="t" style="left:591.0px;top:307.3px;font:400 12px/17px 'Liberation Serif','Noto Serif CJK SC',serif;color:#000;letter-spacing:-1.50px;-webkit-text-stroke:0.2px #000;">INT</span>
<span class="t" style="left:691.0px;top:307.3px;font:400 12px/17px 'Liberation Serif','Noto Serif CJK SC',serif;color:#000;letter-spacing:-1.16px;-webkit-text-stroke:0.2px #000;">Dec</span>
<span class="t" style="left:792.0px;top:307.3px;font:400 12px/17px 'Liberation Serif','Noto Serif CJK SC',serif;color:#000;letter-spacing:-0.50px;-webkit-text-stroke:0.2px #000;">222</span>
<span class="t" style="left:419.0px;top:324.3px;font:400 12px/17px 'Liberation Serif','Noto Serif CJK SC',serif;color:#000;letter-spacing:-1.00px;-webkit-text-stroke:0.2px #000;">12</span>
<span class="t" style="left:465.0px;top:324.3px;font:400 12px/17px 'Liberation Serif','Noto Serif CJK SC',serif;color:#000;letter-spacing:3.00px;-webkit-text-stroke:0.2px #000;">...</span>
<span class="t" style="left:497.0px;top:324.3px;font:400 12px/17px 'Liberation Serif','Noto Serif CJK SC',serif;color:#000;letter-spacing:-0.89px;-webkit-text-stroke:0.2px #000;">D231</span>
<span class="t" style="left:591.0px;top:324.3px;font:400 12px/17px 'Liberation Serif','Noto Serif CJK SC',serif;color:#000;letter-spacing:-1.50px;-webkit-text-stroke:0.2px #000;">INT</span>
<span class="t" style="left:691.0px;top:324.3px;font:400 12px/17px 'Liberation Serif','Noto Serif CJK SC',serif;color:#000;letter-spacing:-1.16px;-webkit-text-stroke:0.2px #000;">Dec</span>
<span class="t" style="left:792.0px;top:324.3px;font:400 12px/17px 'Liberation Serif','Noto Serif CJK SC',serif;color:#000;-webkit-text-stroke:0.2px #000;">0</span>
<span class="t" style="left:419.0px;top:341.3px;font:400 12px/17px 'Liberation Serif','Noto Serif CJK SC',serif;color:#000;letter-spacing:-1.00px;-webkit-text-stroke:0.2px #000;">13</span>
<span class="t" style="left:465.0px;top:341.3px;font:400 12px/17px 'Liberation Serif','Noto Serif CJK SC',serif;color:#000;letter-spacing:3.00px;-webkit-text-stroke:0.2px #000;">...</span>
<span class="t" style="left:497.0px;top:341.3px;font:400 12px/17px 'Liberation Serif','Noto Serif CJK SC',serif;color:#000;letter-spacing:-0.89px;-webkit-text-stroke:0.2px #000;">D232</span>
<span class="t" style="left:591.0px;top:341.3px;font:400 12px/17px 'Liberation Serif','Noto Serif CJK SC',serif;color:#000;letter-spacing:-1.50px;-webkit-text-stroke:0.2px #000;">INT</span>
<span class="t" style="left:691.0px;top:341.3px;font:400 12px/17px 'Liberation Serif','Noto Serif CJK SC',serif;color:#000;letter-spacing:-1.16px;-webkit-text-stroke:0.2px #000;">Dec</span>
<span class="t" style="left:792.0px;top:341.3px;font:400 12px/17px 'Liberation Serif','Noto Serif CJK SC',serif;color:#000;-webkit-text-stroke:0.2px #000;">0</span>
<div style="left:402px;top:836px;width:4px;height:1px;background:#000;"></div>
<div style="left:403px;top:843px;width:3px;height:14px;background:#fff;"></div>
<div style="left:403px;top:857px;width:2px;height:1px;background:#555;"></div>
<!-- jaka -->
<div style="left:405.5px;top:353px;width:959.5px;height:539.5px;background:#fff;"></div>
<div style="left:405.5px;top:353px;width:959.5px;height:50px;background:#f2f2f2;"></div>
<svg style="left:426px;top:365px" width="18" height="26" viewBox="0 0 18 26" fill="none"><path d="M15 2L3 13l12 11" stroke="#5a5a5a" stroke-width="1.600"/></svg>
<svg style="left:996px;top:360px" width="22" height="22" viewBox="0 0 22 22" fill="none"><rect x="1" y="1" width="20" height="20" rx="2.500" stroke="#3c3c3c" stroke-width="1.300"/><rect x="4.500" y="4.500" width="13" height="9" rx="1" stroke="#3c3c3c" stroke-width="1.300"/><circle cx="6.500" cy="17" r="1" fill="#3c3c3c"/><circle cx="11" cy="17" r="1" fill="#3c3c3c"/><circle cx="15.500" cy="17" r="1" fill="#3c3c3c"/></svg>
<svg style="left:1043px;top:360px" width="22" height="22" viewBox="0 0 22 22" fill="none"><path d="M9.300 1.500h3.400l0.500 2.600 1.800 0.800 2.200-1.500 2.400 2.400-1.500 2.200 0.800 1.800 2.600 0.500v3.400l-2.600 0.500-0.800 1.800 1.500 2.200-2.400 2.400-2.200-1.500-1.800 0.800-0.500 2.600h-3.400l-0.500-2.600-1.800-0.800-2.200 1.500-2.400-2.400 1.500-2.200-0.800-1.800-2.600-0.500v-3.400l2.600-0.500 0.800-1.800-1.500-2.200 2.400-2.400 2.200 1.500 1.800-0.800z" stroke="#3c3c3c" stroke-width="1.200" stroke-linejoin="round" transform="translate(0 -1) scale(1)"/><circle cx="11" cy="11" r="3.200" stroke="#3c3c3c" stroke-width="1.200"/></svg>
<svg style="left:1090px;top:360px" width="22" height="22" viewBox="0 0 22 22" fill="none"><rect x="1" y="3" width="20" height="17.500" rx="2.500" stroke="#3c3c3c" stroke-width="1.300"/><path d="M6.500 0.500v4M15.500 0.500v4M5 9h9M5 12.500h12M5 16h7" stroke="#3c3c3c" stroke-width="1.300"/></svg>
<svg style="left:1137px;top:360px" width="22" height="22" viewBox="0 0 22 22" fill="none"><circle cx="11" cy="11" r="10" stroke="#3c3c3c" stroke-width="1.300"/></svg>
<span class="t" style="left:1144.1px;top:361.0px;font:400 15px/21px 'Liberation Sans','Noto Sans CJK SC',sans-serif;color:#3c3c3c;">?</span>
<svg style="left:1184px;top:361px" width="22" height="20" viewBox="0 0 22 20" fill="none"><path d="M1.200 7.500q9.800-9.500 19.600 0M4.600 11q6.400-6 12.800 0M8 14.500q3-3 6 0" stroke="#3c3c3c" stroke-width="1.800" stroke-linecap="round"/><circle cx="11" cy="17.500" r="1.300" fill="#3c3c3c"/></svg>
<svg style="left:1231px;top:359px" width="24" height="24" viewBox="0 0 24 24" fill="none"><rect x="2" y="1.200" width="4.200" height="6" rx="1.300" stroke="#3c3c3c" stroke-width="1.100"/><path d="M6.200 1.900l11.800 4.100M6.200 5.800l9.300 3.300M15.500 9.100l-8.300 7M20.300 11.500l-8.600 8.300" stroke="#3c3c3c" stroke-width="1.100"/><path d="M18 6q3.800 1.800 2.300 5.500" stroke="#3c3c3c" stroke-width="1.100"/><path d="M4 2.500v3.500" stroke="#3c3c3c" stroke-width="0.800"/><circle cx="8.800" cy="18.300" r="2.800" fill="#f2f2f2" stroke="#3c3c3c" stroke-width="1.100"/><rect x="5.300" y="21" width="7.400" height="1.700" fill="#3c3c3c"/></svg>
<span class="t" style="left:986.5px;top:385.5px;font:400 10.5px/15px 'Liberation Sans','Noto Sans CJK SC',sans-serif;color:#666;letter-spacing:0.16px;-webkit-text-stroke:0.25px #666;">Emulatio</span>
<span class="t" style="left:1036.0px;top:385.5px;font:400 10.5px/15px 'Liberation Sans','Noto Sans CJK SC',sans-serif;color:#666;letter-spacing:-0.14px;-webkit-text-stroke:0.25px #666;">Settings</span>
<span class="t" style="left:1093.5px;top:385.5px;font:400 10.5px/15px 'Liberation Sans','Noto Sans CJK SC',sans-serif;color:#666;letter-spacing:-1.02px;-webkit-text-stroke:0.25px #666;">Log</span>
<span class="t" style="left:1137.5px;top:385.5px;font:400 10.5px/15px 'Liberation Sans','Noto Sans CJK SC',sans-serif;color:#666;letter-spacing:0.13px;-webkit-text-stroke:0.25px #666;">Help</span>
<span class="t" style="left:1180.5px;top:385.5px;font:400 10.5px/15px 'Liberation Sans','Noto Sans CJK SC',sans-serif;color:#666;letter-spacing:-0.11px;-webkit-text-stroke:0.25px #666;">WLAN</span>
<span class="t" style="left:1221.5px;top:385.5px;font:400 10.5px/15px 'Liberation Sans','Noto Sans CJK SC',sans-serif;color:#666;letter-spacing:-1.14px;-webkit-text-stroke:0.25px #666;">JKROBO</span>
<div style="left:1025.5px;top:389px;width:1px;height:6px;background:#666;"></div>
<div style="left:1260px;top:389px;width:3px;height:1px;background:#666;"></div>
<div style="left:1262px;top:389px;width:1px;height:7px;background:#666;"></div>
<svg style="left:1027px;top:397px" width="4" height="4" viewBox="0 0 4 4" fill="none"><path d="M4 0v4h-4z" fill="#000"/></svg>
<svg style="left:1262px;top:397px" width="4" height="4" viewBox="0 0 4 4" fill="none"><path d="M4 0v4h-4z" fill="#000"/></svg>
<span class="t" style="left:1278.5px;top:362.0px;font:400 11px/15px 'Liberation Sans','Noto Sans CJK SC',sans-serif;color:#606060;letter-spacing:3.03px;">bfb8</span>
<span class="t" style="left:1278.5px;top:376.5px;font:400 11px/15px 'Liberation Sans','Noto Sans CJK SC',sans-serif;color:#606060;letter-spacing:3.03px;">84ef</span>
<svg style="left:1324px;top:372px" width="26" height="8" viewBox="0 0 26 8" fill="none"><circle cx="3.800" cy="3.700" r="1.500" fill="#333"/><circle cx="12.400" cy="3.700" r="1.500" fill="#333"/><circle cx="20.900" cy="3.700" r="1.500" fill="#333"/></svg>
<span class="t" style="left:412.5px;top:417.5px;font:400 16.5px/23px 'Liberation Sans','Noto Sans CJK SC',sans-serif;color:#505050;letter-spacing:-0.15px;">Control Cabinet</span>
<span class="t" style="left:580.0px;top:417.5px;font:400 16.5px/23px 'Liberation Sans','Noto Sans CJK SC',sans-serif;color:#505050;letter-spacing:0.57px;">Tool</span>
<span class="t" style="left:695.5px;top:417.5px;font:400 16.5px/23px 'Liberation Sans','Noto Sans CJK SC',sans-serif;color:#e0344a;letter-spacing:-0.44px;">Modbus</span>
<span class="t" style="left:807.0px;top:417.5px;font:400 16.5px/23px 'Liberation Sans','Noto Sans CJK SC',sans-serif;color:#505050;letter-spacing:-0.34px;">EtherNet/ IO</span>
<span class="t" style="left:965.5px;top:415.0px;font:400 16.5px/23px 'Liberation Sans','Noto Sans CJK SC',sans-serif;color:#505050;letter-spacing:0.13px;">test</span>
<div style="left:406px;top:452.5px;width:959px;height:1px;background:#d9071f;"></div>
<div style="left:660px;top:451.5px;width:126px;height:2.5px;background:#d9071f;"></div>
<div style="left:1192px;top:410.5px;width:123px;height:25.500px;border-radius:13px;background:#f0f0f0;"></div>
<div style="left:1192px;top:410.5px;width:90px;height:25.500px;border-radius:13px;background:#d9071f;"></div>
<svg style="left:1199px;top:418px" width="12" height="12" viewBox="0 0 12 12" fill="none"><path d="M0.500 1.500h10.500M2.500 2v8.500h6.500v-8.500M4.700 3.500v5M6.900 3.500v5" stroke="#fff" stroke-width="1"/></svg>
<svg style="left:1230px;top:416px" width="14" height="14" viewBox="0 0 14 14" fill="none"><circle cx="7" cy="7" r="5.800" stroke="#fff" stroke-width="1" stroke-dasharray="3.200 1.350"/><path d="M7 4v6" stroke="#fff" stroke-width="1.200"/></svg>
<svg style="left:1263px;top:417px" width="13" height="13" viewBox="0 0 13 13" fill="none"><path d="M7 1.500h-4.500q-1.500 0-1.500 1.500v6.500q0 1.500 1.500 1.500h6.500q1.500 0 1.500-1.500v-4.500" stroke="#fff" stroke-width="1"/><path d="M5 7.800l0.500-1.800 4.800-4.800 1.300 1.300-4.800 4.800z" fill="#fff"/></svg>
<svg style="left:1295px;top:416px" width="14" height="14" viewBox="0 0 14 14" fill="none"><circle cx="7" cy="7" r="5.800" stroke="#444" stroke-width="1" stroke-dasharray="7.300 1.800"/><path d="M5.500 4.300v5.400l4.300-2.700z" stroke="#444" stroke-width="1"/></svg>
<svg style="left:1334px;top:414px" width="17" height="18" viewBox="0 0 17 18" fill="none"><rect x="0.700" y="0.700" width="15.600" height="16.600" rx="1.500" stroke="#5c5c5c" stroke-width="1.300"/><path d="M0.700 5.800h15.600M0.700 11.500h15.600M6 5.800v11.500M11 5.800v11.500" stroke="#5c5c5c" stroke-width="1.300"/></svg>
<span class="t" style="left:1192.5px;top:437.0px;font:400 9.5px/13px 'Liberation Sans','Noto Sans CJK SC',sans-serif;color:#6e6e6e;letter-spacing:-0.29px;-webkit-text-stroke:0.2px #6e6e6e;">Delete</span>
<span class="t" style="left:1225.0px;top:437.0px;font:400 9.5px/13px 'Liberation Sans','Noto Sans CJK SC',sans-serif;color:#6e6e6e;letter-spacing:-0.45px;-webkit-text-stroke:0.2px #6e6e6e;">Add</span>
<span class="t" style="left:1259.5px;top:437.0px;font:400 9.5px/13px 'Liberation Sans','Noto Sans CJK SC',sans-serif;color:#6e6e6e;letter-spacing:-0.79px;-webkit-text-stroke:0.2px #6e6e6e;">Edit</span>
<span class="t" style="left:1297.5px;top:437.0px;font:400 9.5px/13px 'Liberation Sans','Noto Sans CJK SC',sans-serif;color:#6e6e6e;letter-spacing:-0.97px;-webkit-text-stroke:0.2px #6e6e6e;">Run</span>
<span class="t" style="left:1326.0px;top:437.0px;font:400 9.5px/13px 'Liberation Sans','Noto Sans CJK SC',sans-serif;color:#6e6e6e;letter-spacing:-0.31px;-webkit-text-stroke:0.2px #6e6e6e;">Address</span>
<div style="left:445px;top:471.5px;width:4px;height:14px;background:#d9071f;"></div><span class="t" style="left:455.5px;top:467.2px;font:400 15px/21px 'Liberation Sans','Noto Sans CJK SC',sans-serif;color:#e0344a;letter-spacing:0.23px;">Digital Input</span><span class="t" style="left:774.5px;top:476.0px;font:400 11px/15px 'Liberation Sans','Noto Sans CJK SC',sans-serif;color:#b4b4b4;letter-spacing:-0.03px;">Click Name to Edit</span>
<div style="left:445px;top:496px;width:420px;height:163px;border:1px solid #d4d4d4;border-radius:4px;background:#fff;"></div>
<div style="left:854px;top:501px;width:6px;height:12px;border-radius:3px;background:#d9071f;"></div>
<div style="left:489px;top:516.3px;width:12px;height:12px;border-radius:50%;background:radial-gradient(circle,#ee5a30 0,#e8441a 30%,#ec5426 50%,rgba(244,120,84,.55) 66%,rgba(250,170,140,0) 88%);"></div><div style="left:493px;top:519.8px;width:3px;height:2px;border-radius:50%;background:rgba(255,190,160,.55);"></div>
<span class="t" style="left:481.5px;top:533.8px;font:400 14px/20px 'Liberation Sans','Noto Sans CJK SC',sans-serif;color:#505050;letter-spacing:-0.86px;">DI_1</span>
<div style="left:489px;top:591px;width:12px;height:12px;border-radius:50%;background:radial-gradient(circle at 45% 38%,#f6f6f6 0,#e9e9e9 55%,#d2d2d2 100%);border:1px solid #cacaca;box-shadow:0 1px 1px rgba(0,0,0,.12);"></div>
<span class="t" style="left:481.5px;top:608.8px;font:400 14px/20px 'Liberation Sans','Noto Sans CJK SC',sans-serif;color:#505050;letter-spacing:-0.86px;">DI_6</span>
<div style="left:569px;top:516.3px;width:12px;height:12px;border-radius:50%;background:radial-gradient(circle,#ee5a30 0,#e8441a 30%,#ec5426 50%,rgba(244,120,84,.55) 66%,rgba(250,170,140,0) 88%);"></div><div style="left:573px;top:519.8px;width:3px;height:2px;border-radius:50%;background:rgba(255,190,160,.55);"></div>
<span class="t" style="left:561.5px;top:533.8px;font:400 14px/20px 'Liberation Sans','Noto Sans CJK SC',sans-serif;color:#505050;letter-spacing:-0.86px;">DI_2</span>
<div style="left:569px;top:591px;width:12px;height:12px;border-radius:50%;background:radial-gradient(circle at 45% 38%,#f6f6f6 0,#e9e9e9 55%,#d2d2d2 100%);border:1px solid #cacaca;box-shadow:0 1px 1px rgba(0,0,0,.12);"></div>
<span class="t" style="left:561.5px;top:608.8px;font:400 14px/20px 'Liberation Sans','Noto Sans CJK SC',sans-serif;color:#505050;letter-spacing:-0.86px;">DI_7</span>
<div style="left:649px;top:516.3px;width:12px;height:12px;border-radius:50%;background:radial-gradient(circle at 45% 38%,#f6f6f6 0,#e9e9e9 55%,#d2d2d2 100%);border:1px solid #cacaca;box-shadow:0 1px 1px rgba(0,0,0,.12);"></div>
<span class="t" style="left:641.5px;top:533.8px;font:400 14px/20px 'Liberation Sans','Noto Sans CJK SC',sans-serif;color:#505050;letter-spacing:-0.86px;">DI_3</span>
<div style="left:649px;top:591px;width:12px;height:12px;border-radius:50%;background:radial-gradient(circle at 45% 38%,#f6f6f6 0,#e9e9e9 55%,#d2d2d2 100%);border:1px solid #cacaca;box-shadow:0 1px 1px rgba(0,0,0,.12);"></div>
<span class="t" style="left:641.5px;top:608.8px;font:400 14px/20px 'Liberation Sans','Noto Sans CJK SC',sans-serif;color:#505050;letter-spacing:-0.86px;">DI_8</span>
<div style="left:729px;top:516.3px;width:12px;height:12px;border-radius:50%;background:radial-gradient(circle,#ee5a30 0,#e8441a 30%,#ec5426 50%,rgba(244,120,84,.55) 66%,rgba(250,170,140,0) 88%);"></div><div style="left:733px;top:519.8px;width:3px;height:2px;border-radius:50%;background:rgba(255,190,160,.55);"></div>
<span class="t" style="left:721.5px;top:533.8px;font:400 14px/20px 'Liberation Sans','Noto Sans CJK SC',sans-serif;color:#505050;letter-spacing:-0.86px;">DI_4</span>
<div style="left:729px;top:591px;width:12px;height:12px;border-radius:50%;background:radial-gradient(circle at 45% 38%,#f6f6f6 0,#e9e9e9 55%,#d2d2d2 100%);border:1px solid #cacaca;box-shadow:0 1px 1px rgba(0,0,0,.12);"></div>
<span class="t" style="left:721.5px;top:608.8px;font:400 14px/20px 'Liberation Sans','Noto Sans CJK SC',sans-serif;color:#505050;letter-spacing:-0.86px;">DI_9</span>
<div style="left:809px;top:516.3px;width:12px;height:12px;border-radius:50%;background:radial-gradient(circle at 45% 38%,#f6f6f6 0,#e9e9e9 55%,#d2d2d2 100%);border:1px solid #cacaca;box-shadow:0 1px 1px rgba(0,0,0,.12);"></div>
<span class="t" style="left:801.5px;top:533.8px;font:400 14px/20px 'Liberation Sans','Noto Sans CJK SC',sans-serif;color:#505050;letter-spacing:-0.86px;">DI_5</span>
<div style="left:809px;top:591px;width:12px;height:12px;border-radius:50%;background:radial-gradient(circle at 45% 38%,#f6f6f6 0,#e9e9e9 55%,#d2d2d2 100%);border:1px solid #cacaca;box-shadow:0 1px 1px rgba(0,0,0,.12);"></div>
<span class="t" style="left:797.5px;top:608.8px;font:400 14px/20px 'Liberation Sans','Noto Sans CJK SC',sans-serif;color:#505050;letter-spacing:-0.59px;">DI_10</span>
<div style="left:905px;top:471.5px;width:4px;height:14px;background:#d9071f;"></div><span class="t" style="left:915.5px;top:467.2px;font:400 15px/21px 'Liberation Sans','Noto Sans CJK SC',sans-serif;color:#e0344a;letter-spacing:0.35px;">Digital Output</span><span class="t" style="left:1235.0px;top:476.0px;font:400 11px/15px 'Liberation Sans','Noto Sans CJK SC',sans-serif;color:#b4b4b4;letter-spacing:-0.03px;">Click Name to Edit</span>
<div style="left:905px;top:496px;width:420px;height:163px;border:1px solid #d4d4d4;border-radius:4px;background:#fff;"></div>
<div style="left:1314px;top:501px;width:6px;height:28px;border-radius:3px;background:#d9071f;"></div>
<div style="left:934.5px;top:515.5px;width:60px;height:25px;border-radius:13px;background:#f0f0f0;box-shadow:inset 0 0 0 1px #e4e4e4,inset 0 1px 2px rgba(0,0,0,.08);"></div><span class="t" style="left:947.5px;top:518.5px;font:400 13px/18px 'Liberation Sans','Noto Sans CJK SC',sans-serif;color:#e0344a;letter-spacing:-2.00px;">ON</span><div style="left:968.5px;top:516.5px;width:23px;height:23px;border-radius:50%;background:#fff;box-shadow:0 1.500px 2.500px rgba(0,0,0,.34),0 0 1px rgba(0,0,0,.3);"></div>
<span class="t" style="left:948.0px;top:544.5px;font:400 14px/20px 'Liberation Sans','Noto Sans CJK SC',sans-serif;color:#505050;letter-spacing:-1.19px;">DO_1</span>
<div style="left:934.5px;top:600.5px;width:60px;height:25px;border-radius:13px;background:#f0f0f0;box-shadow:inset 0 0 0 1px #e4e4e4,inset 0 1px 2px rgba(0,0,0,.08);"></div><span class="t" style="left:965.0px;top:603.5px;font:400 13px/18px 'Liberation Sans','Noto Sans CJK SC',sans-serif;color:#9a9a9a;letter-spacing:-1.50px;">OFF</span><div style="left:937.5px;top:601.5px;width:23px;height:23px;border-radius:50%;background:#fff;box-shadow:0 1.500px 2.500px rgba(0,0,0,.34),0 0 1px rgba(0,0,0,.3);"></div>
<span class="t" style="left:948.0px;top:629.5px;font:400 14px/20px 'Liberation Sans','Noto Sans CJK SC',sans-serif;color:#505050;letter-spacing:-1.19px;">DO_5</span>
<div style="left:1029.5px;top:515.5px;width:60px;height:25px;border-radius:13px;background:#f0f0f0;box-shadow:inset 0 0 0 1px #e4e4e4,inset 0 1px 2px rgba(0,0,0,.08);"></div><span class="t" style="left:1042.5px;top:518.5px;font:400 13px/18px 'Liberation Sans','Noto Sans CJK SC',sans-serif;color:#e0344a;letter-spacing:-2.00px;">ON</span><div style="left:1063.5px;top:516.5px;width:23px;height:23px;border-radius:50%;background:#fff;box-shadow:0 1.500px 2.500px rgba(0,0,0,.34),0 0 1px rgba(0,0,0,.3);"></div>
<span class="t" style="left:1043.0px;top:544.5px;font:400 14px/20px 'Liberation Sans','Noto Sans CJK SC',sans-serif;color:#505050;letter-spacing:-1.19px;">DO_2</span>
<div style="left:1029.5px;top:600.5px;width:60px;height:25px;border-radius:13px;background:#f0f0f0;box-shadow:inset 0 0 0 1px #e4e4e4,inset 0 1px 2px rgba(0,0,0,.08);"></div><span class="t" style="left:1060.0px;top:603.5px;font:400 13px/18px 'Liberation Sans','Noto Sans CJK SC',sans-serif;color:#9a9a9a;letter-spacing:-1.50px;">OFF</span><div style="left:1032.5px;top:601.5px;width:23px;height:23px;border-radius:50%;background:#fff;box-shadow:0 1.500px 2.500px rgba(0,0,0,.34),0 0 1px rgba(0,0,0,.3);"></div>
<span class="t" style="left:1043.0px;top:629.5px;font:400 14px/20px 'Liberation Sans','Noto Sans CJK SC',sans-serif;color:#505050;letter-spacing:-1.19px;">DO_6</span>
<div style="left:1125px;top:515.5px;width:60px;height:25px;border-radius:13px;background:#f0f0f0;box-shadow:inset 0 0 0 1px #e4e4e4,inset 0 1px 2px rgba(0,0,0,.08);"></div><span class="t" style="left:1155.5px;top:518.5px;font:400 13px/18px 'Liberation Sans','Noto Sans CJK SC',sans-serif;color:#9a9a9a;letter-spacing:-1.50px;">OFF</span><div style="left:1128.0px;top:516.5px;width:23px;height:23px;border-radius:50%;background:#fff;box-shadow:0 1.500px 2.500px rgba(0,0,0,.34),0 0 1px rgba(0,0,0,.3);"></div>
<span class="t" style="left:1138.5px;top:544.5px;font:400 14px/20px 'Liberation Sans','Noto Sans CJK SC',sans-serif;color:#505050;letter-spacing:-1.19px;">DO_3</span>
<div style="left:1125px;top:600.5px;width:60px;height:25px;border-radius:13px;background:#f0f0f0;box-shadow:inset 0 0 0 1px #e4e4e4,inset 0 1px 2px rgba(0,0,0,.08);"></div><span class="t" style="left:1155.5px;top:603.5px;font:400 13px/18px 'Liberation Sans','Noto Sans CJK SC',sans-serif;color:#9a9a9a;letter-spacing:-1.50px;">OFF</span><div style="left:1128.0px;top:601.5px;width:23px;height:23px;border-radius:50%;background:#fff;box-shadow:0 1.500px 2.500px rgba(0,0,0,.34),0 0 1px rgba(0,0,0,.3);"></div>
<span class="t" style="left:1138.5px;top:629.5px;font:400 14px/20px 'Liberation Sans','Noto Sans CJK SC',sans-serif;color:#505050;letter-spacing:-1.19px;">DO_7</span>
<div style="left:1220px;top:515.5px;width:60px;height:25px;border-radius:13px;background:#f0f0f0;box-shadow:inset 0 0 0 1px #e4e4e4,inset 0 1px 2px rgba(0,0,0,.08);"></div><span class="t" style="left:1250.5px;top:518.5px;font:400 13px/18px 'Liberation Sans','Noto Sans CJK SC',sans-serif;color:#9a9a9a;letter-spacing:-1.50px;">OFF</span><div style="left:1223.0px;top:516.5px;width:23px;height:23px;border-radius:50%;background:#fff;box-shadow:0 1.500px 2.500px rgba(0,0,0,.34),0 0 1px rgba(0,0,0,.3);"></div>
<span class="t" style="left:1233.5px;top:544.5px;font:400 14px/20px 'Liberation Sans','Noto Sans CJK SC',sans-serif;color:#505050;letter-spacing:-1.19px;">DO_4</span>
<div style="left:1220px;top:600.5px;width:60px;height:25px;border-radius:13px;background:#f0f0f0;box-shadow:inset 0 0 0 1px #e4e4e4,inset 0 1px 2px rgba(0,0,0,.08);"></div><span class="t" style="left:1250.5px;top:603.5px;font:400 13px/18px 'Liberation Sans','Noto Sans CJK SC',sans-serif;color:#9a9a9a;letter-spacing:-1.50px;">OFF</span><div style="left:1223.0px;top:601.5px;width:23px;height:23px;border-radius:50%;background:#fff;box-shadow:0 1.500px 2.500px rgba(0,0,0,.34),0 0 1px rgba(0,0,0,.3);"></div>
<span class="t" style="left:1233.5px;top:629.5px;font:400 14px/20px 'Liberation Sans','Noto Sans CJK SC',sans-serif;color:#505050;letter-spacing:-1.19px;">DO_8</span>
<div style="left:445px;top:676.5px;width:4px;height:14px;background:#d9071f;"></div><span class="t" style="left:455.5px;top:672.2px;font:400 15px/21px 'Liberation Sans','Noto Sans CJK SC',sans-serif;color:#e0344a;letter-spacing:0.16px;">Analog Input</span><span class="t" style="left:774.5px;top:681.0px;font:400 11px/15px 'Liberation Sans','Noto Sans CJK SC',sans-serif;color:#b4b4b4;letter-spacing:-0.03px;">Click Name to Edit</span>
<div style="left:445px;top:701px;width:420px;height:163px;border:1px solid #d4d4d4;border-radius:4px;background:#fff;"></div>
<div style="left:446px;top:726.5px;width:418px;height:1px;background:#d9071f;"></div>
<div style="left:446px;top:725.5px;width:100px;height:2.5px;background:#d9071f;"></div>
<span class="t" style="left:454.0px;top:706.5px;font:400 12px/17px 'Liberation Sans','Noto Sans CJK SC',sans-serif;color:#e0344a;letter-spacing:0.05px;">Modbus Integer</span>
<span class="t" style="left:554.5px;top:706.5px;font:400 12px/17px 'Liberation Sans','Noto Sans CJK SC',sans-serif;color:#505050;letter-spacing:-0.03px;">Modbus Signed</span>
<span class="t" style="left:659.0px;top:706.5px;font:400 12px/17px 'Liberation Sans','Noto Sans CJK SC',sans-serif;color:#505050;letter-spacing:0.12px;">Modbus Float</span>
<div style="left:854px;top:733px;width:6px;height:56px;border-radius:3px;background:#d9071f;"></div>
<div style="left:470px;top:743px;width:70px;height:23px;border-radius:2px;background:#fff;border:1px solid #9c9c9c;box-shadow:0 1px 0 rgba(0,0,0,.12);"></div><span class="t" style="left:492.9px;top:744.7px;font:400 14.5px/20px 'Liberation Sans','Noto Sans CJK SC',sans-serif;color:#9a9a9a;">222</span>
<span class="t" style="left:491.5px;top:771.0px;font:400 14px/20px 'Liberation Sans','Noto Sans CJK SC',sans-serif;color:#505050;letter-spacing:-0.60px;">AI_1</span>
<div style="left:470px;top:821px;width:70px;height:23px;border-radius:2px;background:#fff;border:1px solid #9c9c9c;box-shadow:0 1px 0 rgba(0,0,0,.12);"></div><span class="t" style="left:501.0px;top:822.7px;font:400 14.5px/20px 'Liberation Sans','Noto Sans CJK SC',sans-serif;color:#9a9a9a;">0</span>
<span class="t" style="left:491.5px;top:848.5px;font:400 14px/20px 'Liberation Sans','Noto Sans CJK SC',sans-serif;color:#505050;letter-spacing:-0.60px;clip-path:inset(0 0 4px 0);">AI_5</span>
<div style="left:565px;top:743px;width:70px;height:23px;border-radius:2px;background:#fff;border:1px solid #9c9c9c;box-shadow:0 1px 0 rgba(0,0,0,.12);"></div><span class="t" style="left:596.0px;top:744.7px;font:400 14.5px/20px 'Liberation Sans','Noto Sans CJK SC',sans-serif;color:#9a9a9a;">0</span>
<span class="t" style="left:586.5px;top:771.0px;font:400 14px/20px 'Liberation Sans','Noto Sans CJK SC',sans-serif;color:#505050;letter-spacing:-0.60px;">AI_2</span>
<div style="left:565px;top:821px;width:70px;height:23px;border-radius:2px;background:#fff;border:1px solid #9c9c9c;box-shadow:0 1px 0 rgba(0,0,0,.12);"></div><span class="t" style="left:596.0px;top:822.7px;font:400 14.5px/20px 'Liberation Sans','Noto Sans CJK SC',sans-serif;color:#9a9a9a;">0</span>
<span class="t" style="left:586.5px;top:848.5px;font:400 14px/20px 'Liberation Sans','Noto Sans CJK SC',sans-serif;color:#505050;letter-spacing:-0.60px;clip-path:inset(0 0 4px 0);">AI_6</span>
<div style="left:660px;top:743px;width:70px;height:23px;border-radius:2px;background:#fff;border:1px solid #9c9c9c;box-shadow:0 1px 0 rgba(0,0,0,.12);"></div><span class="t" style="left:691.0px;top:744.7px;font:400 14.5px/20px 'Liberation Sans','Noto Sans CJK SC',sans-serif;color:#9a9a9a;">0</span>
<span class="t" style="left:681.5px;top:771.0px;font:400 14px/20px 'Liberation Sans','Noto Sans CJK SC',sans-serif;color:#505050;letter-spacing:-0.60px;">AI_3</span>
<div style="left:660px;top:821px;width:70px;height:23px;border-radius:2px;background:#fff;border:1px solid #9c9c9c;box-shadow:0 1px 0 rgba(0,0,0,.12);"></div><span class="t" style="left:691.0px;top:822.7px;font:400 14.5px/20px 'Liberation Sans','Noto Sans CJK SC',sans-serif;color:#9a9a9a;">0</span>
<span class="t" style="left:681.5px;top:848.5px;font:400 14px/20px 'Liberation Sans','Noto Sans CJK SC',sans-serif;color:#505050;letter-spacing:-0.60px;clip-path:inset(0 0 4px 0);">AI_7</span>
<div style="left:755px;top:743px;width:70px;height:23px;border-radius:2px;background:#fff;border:1px solid #9c9c9c;box-shadow:0 1px 0 rgba(0,0,0,.12);"></div><span class="t" style="left:786.0px;top:744.7px;font:400 14.5px/20px 'Liberation Sans','Noto Sans CJK SC',sans-serif;color:#9a9a9a;">0</span>
<span class="t" style="left:776.5px;top:771.0px;font:400 14px/20px 'Liberation Sans','Noto Sans CJK SC',sans-serif;color:#505050;letter-spacing:-0.60px;">AI_4</span>
<div style="left:755px;top:821px;width:70px;height:23px;border-radius:2px;background:#fff;border:1px solid #9c9c9c;box-shadow:0 1px 0 rgba(0,0,0,.12);"></div><span class="t" style="left:786.0px;top:822.7px;font:400 14.5px/20px 'Liberation Sans','Noto Sans CJK SC',sans-serif;color:#9a9a9a;">0</span>
<span class="t" style="left:776.5px;top:848.5px;font:400 14px/20px 'Liberation Sans','Noto Sans CJK SC',sans-serif;color:#505050;letter-spacing:-0.60px;clip-path:inset(0 0 4px 0);">AI_8</span>
<div style="left:905px;top:676.5px;width:4px;height:14px;background:#d9071f;"></div><span class="t" style="left:915.5px;top:672.2px;font:400 15px/21px 'Liberation Sans','Noto Sans CJK SC',sans-serif;color:#e0344a;letter-spacing:0.34px;">Analog Output</span><span class="t" style="left:1235.0px;top:681.0px;font:400 11px/15px 'Liberation Sans','Noto Sans CJK SC',sans-serif;color:#b4b4b4;letter-spacing:-0.03px;">Click Name to Edit</span>
<div style="left:905px;top:701px;width:420px;height:163px;border:1px solid #d4d4d4;border-radius:4px;background:#fff;"></div>
<div style="left:906px;top:726.5px;width:418px;height:1px;background:#d9071f;"></div>
<div style="left:906px;top:725.5px;width:100px;height:2.5px;background:#d9071f;"></div>
<span class="t" style="left:914.0px;top:706.5px;font:400 12px/17px 'Liberation Sans','Noto Sans CJK SC',sans-serif;color:#e0344a;letter-spacing:0.05px;">Modbus Integer</span>
<span class="t" style="left:1014.0px;top:706.5px;font:400 12px/17px 'Liberation Sans','Noto Sans CJK SC',sans-serif;color:#505050;">Modbus Signed</span>
<span class="t" style="left:1119.0px;top:706.5px;font:400 12px/17px 'Liberation Sans','Noto Sans CJK SC',sans-serif;color:#505050;letter-spacing:0.12px;">Modbus Float</span>
<div style="left:1314px;top:733px;width:6px;height:56px;border-radius:3px;background:#d9071f;"></div>
<div style="left:935px;top:743px;width:70px;height:23px;border-radius:2px;background:#fff;border:1px solid #9c9c9c;box-shadow:0 1px 0 rgba(0,0,0,.12);"></div><span class="t" style="left:957.9px;top:744.7px;font:400 14.5px/20px 'Liberation Sans','Noto Sans CJK SC',sans-serif;color:#9a9a9a;">123</span>
<span class="t" style="left:953.5px;top:771.0px;font:400 14px/20px 'Liberation Sans','Noto Sans CJK SC',sans-serif;color:#505050;letter-spacing:-0.94px;">AO_1</span>
<div style="left:935px;top:821px;width:70px;height:23px;border-radius:2px;background:#fff;border:1px solid #9c9c9c;box-shadow:0 1px 0 rgba(0,0,0,.12);"></div><span class="t" style="left:966.0px;top:822.7px;font:400 14.5px/20px 'Liberation Sans','Noto Sans CJK SC',sans-serif;color:#9a9a9a;">0</span>
<span class="t" style="left:953.5px;top:848.5px;font:400 14px/20px 'Liberation Sans','Noto Sans CJK SC',sans-serif;color:#505050;letter-spacing:-0.94px;clip-path:inset(0 0 4px 0);">AO_5</span>
<div style="left:1030px;top:743px;width:70px;height:23px;border-radius:2px;background:#fff;border:1px solid #9c9c9c;box-shadow:0 1px 0 rgba(0,0,0,.12);"></div><span class="t" style="left:1061.0px;top:744.7px;font:400 14.5px/20px 'Liberation Sans','Noto Sans CJK SC',sans-serif;color:#9a9a9a;">0</span>
<span class="t" style="left:1048.5px;top:771.0px;font:400 14px/20px 'Liberation Sans','Noto Sans CJK SC',sans-serif;color:#505050;letter-spacing:-0.94px;">AO_2</span>
<div style="left:1030px;top:821px;width:70px;height:23px;border-radius:2px;background:#fff;border:1px solid #9c9c9c;box-shadow:0 1px 0 rgba(0,0,0,.12);"></div><span class="t" style="left:1061.0px;top:822.7px;font:400 14.5px/20px 'Liberation Sans','Noto Sans CJK SC',sans-serif;color:#9a9a9a;">0</span>
<span class="t" style="left:1048.5px;top:848.5px;font:400 14px/20px 'Liberation Sans','Noto Sans CJK SC',sans-serif;color:#505050;letter-spacing:-0.94px;clip-path:inset(0 0 4px 0);">AO_6</span>
<div style="left:1130px;top:743px;width:70px;height:23px;border-radius:2px;background:#fff;border:1px solid #9c9c9c;box-shadow:0 1px 0 rgba(0,0,0,.12);"></div><span class="t" style="left:1161.0px;top:744.7px;font:400 14.5px/20px 'Liberation Sans','Noto Sans CJK SC',sans-serif;color:#9a9a9a;">0</span>
<span class="t" style="left:1148.5px;top:771.0px;font:400 14px/20px 'Liberation Sans','Noto Sans CJK SC',sans-serif;color:#505050;letter-spacing:-0.94px;">AO_3</span>
<div style="left:1130px;top:821px;width:70px;height:23px;border-radius:2px;background:#fff;border:1px solid #9c9c9c;box-shadow:0 1px 0 rgba(0,0,0,.12);"></div><span class="t" style="left:1161.0px;top:822.7px;font:400 14.5px/20px 'Liberation Sans','Noto Sans CJK SC',sans-serif;color:#9a9a9a;">0</span>
<span class="t" style="left:1148.5px;top:848.5px;font:400 14px/20px 'Liberation Sans','Noto Sans CJK SC',sans-serif;color:#505050;letter-spacing:-0.94px;clip-path:inset(0 0 4px 0);">AO_7</span>
<div style="left:1225px;top:743px;width:70px;height:23px;border-radius:2px;background:#fff;border:1px solid #9c9c9c;box-shadow:0 1px 0 rgba(0,0,0,.12);"></div><span class="t" style="left:1256.0px;top:744.7px;font:400 14.5px/20px 'Liberation Sans','Noto Sans CJK SC',sans-serif;color:#9a9a9a;">0</span>
<span class="t" style="left:1243.5px;top:771.0px;font:400 14px/20px 'Liberation Sans','Noto Sans CJK SC',sans-serif;color:#505050;letter-spacing:-0.94px;">AO_4</span>
<div style="left:1225px;top:821px;width:70px;height:23px;border-radius:2px;background:#fff;border:1px solid #9c9c9c;box-shadow:0 1px 0 rgba(0,0,0,.12);"></div><span class="t" style="left:1256.0px;top:822.7px;font:400 14.5px/20px 'Liberation Sans','Noto Sans CJK SC',sans-serif;color:#9a9a9a;">0</span>
<span class="t" style="left:1243.5px;top:848.5px;font:400 14px/20px 'Liberation Sans','Noto Sans CJK SC',sans-serif;color:#505050;letter-spacing:-0.94px;clip-path:inset(0 0 4px 0);">AO_8</span>
<svg style="left:867px;top:875px" width="36" height="14" viewBox="0 0 36 14" fill="none"><path d="M1.500 13l16.500-11 16.500 11" stroke="#555" stroke-width="1.500"/></svg>
<!-- arrows -->
<svg style="left:0;top:0" width="1553" height="896" viewBox="0 0 1553 896" fill="#ea1c24"><polygon points="901.5,140.4 919.1,138.5 916.9,142.3 958.6,159.6 958.2,160.6 914.8,148.5 914.1,152.8"/><polygon points="911.3,208.4 928.8,205.4 926.8,209.3 979.3,226.8 979.1,227.8 925.1,215.7 924.7,220.0"/><polygon points="908.5,262.1 925.3,256.6 924.0,260.7 979.5,270.5 979.3,271.5 923.2,267.3 923.4,271.6"/><polygon points="899.5,317.0 915.8,310.0 914.8,314.3 974.7,319.4 974.7,320.4 914.6,320.9 915.2,325.2"/><polygon points="591.2,507.9 597.5,491.3 599.9,495.0 632.2,468.0 632.8,468.8 604.5,499.8 608.0,502.3"/><polygon points="1010.1,503.7 1018.4,488.0 1020.3,492.0 1061.1,465.1 1061.7,465.9 1024.3,497.3 1027.5,500.2"/><polygon points="519.3,736.6 518.9,718.9 522.5,721.4 539.9,689.5 540.9,689.9 528.5,724.1 532.8,725.1"/><polygon points="984.4,740.6 989.7,723.7 992.3,727.2 1025.9,695.2 1026.7,695.8 997.2,731.7 1000.9,734.1"/></svg>
</body></html>
